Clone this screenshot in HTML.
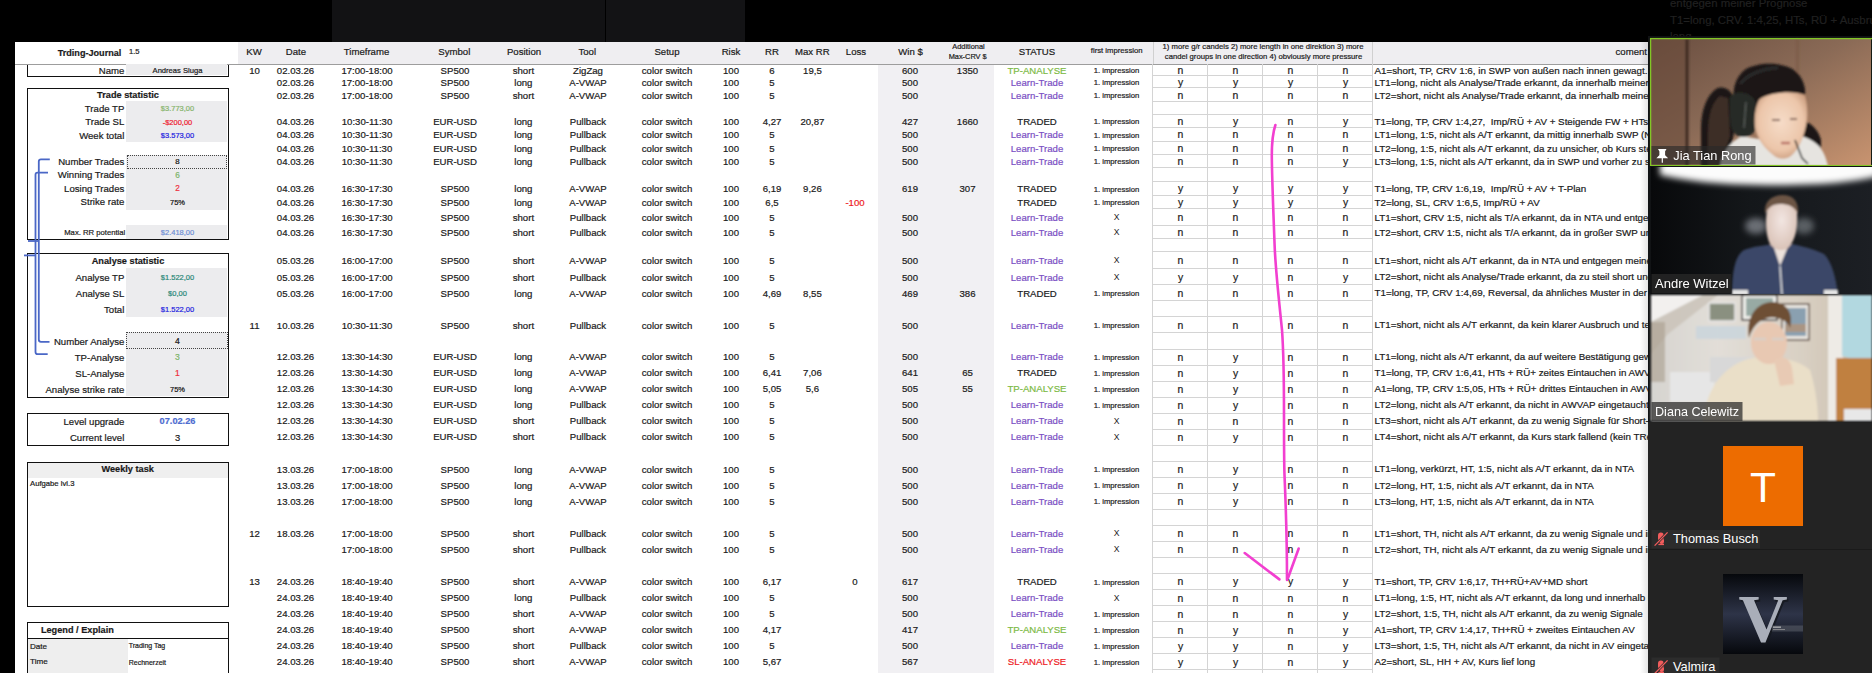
<!DOCTYPE html><html><head><meta charset="utf-8"><title>Trading Journal</title><style>
*{margin:0;padding:0;box-sizing:border-box}
html,body{width:1872px;height:673px;overflow:hidden;background:#000}
body{position:relative;font-family:"Liberation Sans",sans-serif;color:#1a1a1a}
.a{position:absolute}
.t{position:absolute;white-space:pre;line-height:1;-webkit-text-stroke:0.2px currentColor}
.c{text-align:center}
.r{text-align:right}
</style></head><body><div class="a" style="left:332px;top:0;width:273px;height:42px;background:#121214"></div>
<div class="a" style="left:606px;top:0;width:139px;height:42px;background:#131315"></div>
<div class="t" style="left:1670px;top:-2px;font-size:11.4px;color:#202020">entgegen meiner Prognose</div>
<div class="t" style="left:1670px;top:15px;font-size:11.4px;color:#202020">T1=long, CRV. 1:4,25, HTs, RÜ + Ausbruch</div>
<div class="t" style="left:1670px;top:31px;font-size:11.4px;color:#202020">long</div>
<div class="a" style="left:15px;top:42px;width:1633px;height:631px;background:#fff;overflow:hidden">
<div class="a" style="left:-15px;top:-42px;width:1872px;height:673px">
<div class="a" style="left:238px;top:42px;width:1410px;height:22px;background:#efeef1"></div>
<div class="a" style="left:15px;top:64px;width:1633px;height:1px;background:#9d9d9d"></div>
<div class="a" style="left:878px;top:65px;width:116px;height:620px;background:#f1f0f3"></div>
<div class="t" style="font-size:9.1px;height:9.1px;top:48.55px;left:57.70px;font-weight:bold;">Trding-Journal</div>
<div class="t" style="font-size:7.6px;height:7.6px;top:48.20px;left:129.00px;">1.5</div>
<div class="t" style="font-size:9.6px;height:9.6px;top:47.40px;left:154.00px;width:200px;text-align:center;">KW</div>
<div class="t" style="font-size:9.6px;height:9.6px;top:47.40px;left:196.00px;width:200px;text-align:center;">Date</div>
<div class="t" style="font-size:9.6px;height:9.6px;top:47.40px;left:266.50px;width:200px;text-align:center;">Timeframe</div>
<div class="t" style="font-size:9.6px;height:9.6px;top:47.40px;left:354.30px;width:200px;text-align:center;">Symbol</div>
<div class="t" style="font-size:9.6px;height:9.6px;top:47.40px;left:424.00px;width:200px;text-align:center;">Position</div>
<div class="t" style="font-size:9.6px;height:9.6px;top:47.40px;left:487.30px;width:200px;text-align:center;">Tool</div>
<div class="t" style="font-size:9.6px;height:9.6px;top:47.40px;left:567.00px;width:200px;text-align:center;">Setup</div>
<div class="t" style="font-size:9.6px;height:9.6px;top:47.40px;left:631.00px;width:200px;text-align:center;">Risk</div>
<div class="t" style="font-size:9.6px;height:9.6px;top:47.40px;left:672.00px;width:200px;text-align:center;">RR</div>
<div class="t" style="font-size:9.6px;height:9.6px;top:47.40px;left:712.30px;width:200px;text-align:center;">Max RR</div>
<div class="t" style="font-size:9.6px;height:9.6px;top:47.40px;left:756.00px;width:200px;text-align:center;">Loss</div>
<div class="t" style="font-size:9.6px;height:9.6px;top:47.40px;left:810.50px;width:200px;text-align:center;">Win $</div>
<div class="t" style="font-size:9.6px;height:9.6px;top:47.40px;left:937.00px;width:200px;text-align:center;">STATUS</div>
<div class="t" style="font-size:7.4px;height:7.4px;top:42.80px;left:868.50px;width:200px;text-align:center;">Additional</div>
<div class="t" style="font-size:7.4px;height:7.4px;top:52.80px;left:867.70px;width:200px;text-align:center;">Max-CRV $</div>
<div class="t" style="font-size:7.7px;height:7.7px;top:47.35px;left:1016.70px;width:200px;text-align:center;">first impression</div>
<div class="t" style="font-size:7.7px;height:7.7px;top:42.65px;left:1113.00px;width:300px;text-align:center;">1) more g/r candels 2) more length in one direktion 3) more</div>
<div class="t" style="font-size:7.7px;height:7.7px;top:53.15px;left:1113.50px;width:300px;text-align:center;">candel groups in one direction 4) obviously more pressure</div>
<div class="t" style="font-size:9.6px;height:9.6px;top:47.40px;left:1447.00px;width:200px;text-align:right;">coment</div>
<div class="a" style="left:1152.5px;top:42px;width:1px;height:22px;background:#d0d0d0"></div>
<div class="a" style="left:1372px;top:42px;width:1px;height:22px;background:#d0d0d0"></div>
<div class="a" style="left:1152px;top:64px;width:1px;height:620px;background:#d4d4d4"></div>
<div class="a" style="left:1207px;top:64px;width:1px;height:620px;background:#d4d4d4"></div>
<div class="a" style="left:1262px;top:64px;width:1px;height:620px;background:#d4d4d4"></div>
<div class="a" style="left:1317px;top:64px;width:1px;height:620px;background:#d4d4d4"></div>
<div class="a" style="left:1372px;top:64px;width:1px;height:620px;background:#d4d4d4"></div>
<div class="a" style="left:1153px;top:75px;width:220px;height:1px;background:#d4d4d4"></div>
<div class="a" style="left:1153px;top:87px;width:220px;height:1px;background:#d4d4d4"></div>
<div class="a" style="left:1153px;top:101px;width:220px;height:1px;background:#d4d4d4"></div>
<div class="a" style="left:1153px;top:114px;width:220px;height:1px;background:#d4d4d4"></div>
<div class="a" style="left:1153px;top:127px;width:220px;height:1px;background:#d4d4d4"></div>
<div class="a" style="left:1153px;top:141px;width:220px;height:1px;background:#d4d4d4"></div>
<div class="a" style="left:1153px;top:154px;width:220px;height:1px;background:#d4d4d4"></div>
<div class="a" style="left:1153px;top:167px;width:220px;height:1px;background:#d4d4d4"></div>
<div class="a" style="left:1153px;top:181px;width:220px;height:1px;background:#d4d4d4"></div>
<div class="a" style="left:1153px;top:195px;width:220px;height:1px;background:#d4d4d4"></div>
<div class="a" style="left:1153px;top:208px;width:220px;height:1px;background:#d4d4d4"></div>
<div class="a" style="left:1153px;top:225px;width:220px;height:1px;background:#d4d4d4"></div>
<div class="a" style="left:1153px;top:238px;width:220px;height:1px;background:#d4d4d4"></div>
<div class="a" style="left:1153px;top:251px;width:220px;height:1px;background:#d4d4d4"></div>
<div class="a" style="left:1153px;top:268px;width:220px;height:1px;background:#d4d4d4"></div>
<div class="a" style="left:1153px;top:284px;width:220px;height:1px;background:#d4d4d4"></div>
<div class="a" style="left:1153px;top:300px;width:220px;height:1px;background:#d4d4d4"></div>
<div class="a" style="left:1153px;top:316px;width:220px;height:1px;background:#d4d4d4"></div>
<div class="a" style="left:1153px;top:332px;width:220px;height:1px;background:#d4d4d4"></div>
<div class="a" style="left:1153px;top:349px;width:220px;height:1px;background:#d4d4d4"></div>
<div class="a" style="left:1153px;top:365px;width:220px;height:1px;background:#d4d4d4"></div>
<div class="a" style="left:1153px;top:381px;width:220px;height:1px;background:#d4d4d4"></div>
<div class="a" style="left:1153px;top:397px;width:220px;height:1px;background:#d4d4d4"></div>
<div class="a" style="left:1153px;top:413px;width:220px;height:1px;background:#d4d4d4"></div>
<div class="a" style="left:1153px;top:429px;width:220px;height:1px;background:#d4d4d4"></div>
<div class="a" style="left:1153px;top:445px;width:220px;height:1px;background:#d4d4d4"></div>
<div class="a" style="left:1153px;top:461px;width:220px;height:1px;background:#d4d4d4"></div>
<div class="a" style="left:1153px;top:477px;width:220px;height:1px;background:#d4d4d4"></div>
<div class="a" style="left:1153px;top:493px;width:220px;height:1px;background:#d4d4d4"></div>
<div class="a" style="left:1153px;top:509px;width:220px;height:1px;background:#d4d4d4"></div>
<div class="a" style="left:1153px;top:525px;width:220px;height:1px;background:#d4d4d4"></div>
<div class="a" style="left:1153px;top:541px;width:220px;height:1px;background:#d4d4d4"></div>
<div class="a" style="left:1153px;top:557px;width:220px;height:1px;background:#d4d4d4"></div>
<div class="a" style="left:1153px;top:573px;width:220px;height:1px;background:#d4d4d4"></div>
<div class="a" style="left:1153px;top:589px;width:220px;height:1px;background:#d4d4d4"></div>
<div class="a" style="left:1153px;top:605px;width:220px;height:1px;background:#d4d4d4"></div>
<div class="a" style="left:1153px;top:621px;width:220px;height:1px;background:#d4d4d4"></div>
<div class="a" style="left:1153px;top:637px;width:220px;height:1px;background:#d4d4d4"></div>
<div class="a" style="left:1153px;top:653px;width:220px;height:1px;background:#d4d4d4"></div>
<div class="a" style="left:1153px;top:669px;width:220px;height:1px;background:#d4d4d4"></div>
<div class="a" style="left:1153px;top:685px;width:220px;height:1px;background:#d4d4d4"></div>
<div class="t" style="font-size:9.6px;height:9.6px;top:65.75px;left:154.50px;width:200px;text-align:center;">10</div>
<div class="t" style="font-size:9.6px;height:9.6px;top:65.75px;left:195.50px;width:200px;text-align:center;">02.03.26</div>
<div class="t" style="font-size:9.6px;height:9.6px;top:65.75px;left:267.00px;width:200px;text-align:center;">17:00-18:00</div>
<div class="t" style="font-size:9.6px;height:9.6px;top:65.75px;left:355.00px;width:200px;text-align:center;">SP500</div>
<div class="t" style="font-size:9.6px;height:9.6px;top:65.75px;left:423.40px;width:200px;text-align:center;">short</div>
<div class="t" style="font-size:9.6px;height:9.6px;top:65.75px;left:488.00px;width:200px;text-align:center;">ZigZag</div>
<div class="t" style="font-size:9.6px;height:9.6px;top:65.75px;left:567.00px;width:200px;text-align:center;letter-spacing:0.04px">color switch</div>
<div class="t" style="font-size:9.6px;height:9.6px;top:65.75px;left:631.00px;width:200px;text-align:center;">100</div>
<div class="t" style="font-size:9.6px;height:9.6px;top:65.75px;left:672.00px;width:200px;text-align:center;">6</div>
<div class="t" style="font-size:9.6px;height:9.6px;top:65.75px;left:712.40px;width:200px;text-align:center;">19,5</div>
<div class="t" style="font-size:9.6px;height:9.6px;top:65.75px;left:810.00px;width:200px;text-align:center;">600</div>
<div class="t" style="font-size:9.6px;height:9.6px;top:65.75px;left:867.50px;width:200px;text-align:center;">1350</div>
<div class="t" style="font-size:9.6px;height:9.6px;top:65.75px;left:937.00px;width:200px;text-align:center;color:#7cba45;">TP-ANALYSE</div>
<div class="t" style="font-size:7.7px;height:7.7px;top:67.20px;left:1016.50px;width:200px;text-align:center;">1. impression</div>
<div class="t" style="font-size:10.4px;height:10.4px;top:65.95px;left:1080.50px;width:200px;text-align:center;">n</div>
<div class="t" style="font-size:10.4px;height:10.4px;top:65.95px;left:1135.50px;width:200px;text-align:center;">n</div>
<div class="t" style="font-size:10.4px;height:10.4px;top:65.95px;left:1190.50px;width:200px;text-align:center;">n</div>
<div class="t" style="font-size:10.4px;height:10.4px;top:65.95px;left:1245.50px;width:200px;text-align:center;">n</div>
<div class="t" style="font-size:9.8px;height:9.8px;top:65.65px;left:1374.50px;">A1=short, TP, CRV 1:6, in SWP von außen nach innen gewagt.</div>
<div class="t" style="font-size:9.6px;height:9.6px;top:78.00px;left:195.50px;width:200px;text-align:center;">02.03.26</div>
<div class="t" style="font-size:9.6px;height:9.6px;top:78.00px;left:267.00px;width:200px;text-align:center;">17:00-18:00</div>
<div class="t" style="font-size:9.6px;height:9.6px;top:78.00px;left:355.00px;width:200px;text-align:center;">SP500</div>
<div class="t" style="font-size:9.6px;height:9.6px;top:78.00px;left:423.40px;width:200px;text-align:center;">long</div>
<div class="t" style="font-size:9.6px;height:9.6px;top:78.00px;left:488.00px;width:200px;text-align:center;">A-VWAP</div>
<div class="t" style="font-size:9.6px;height:9.6px;top:78.00px;left:567.00px;width:200px;text-align:center;letter-spacing:0.04px">color switch</div>
<div class="t" style="font-size:9.6px;height:9.6px;top:78.00px;left:631.00px;width:200px;text-align:center;">100</div>
<div class="t" style="font-size:9.6px;height:9.6px;top:78.00px;left:672.00px;width:200px;text-align:center;">5</div>
<div class="t" style="font-size:9.6px;height:9.6px;top:78.00px;left:810.00px;width:200px;text-align:center;">500</div>
<div class="t" style="font-size:9.6px;height:9.6px;top:78.00px;left:937.00px;width:200px;text-align:center;color:#7b4fc4;">Learn-Trade</div>
<div class="t" style="font-size:7.7px;height:7.7px;top:79.45px;left:1016.50px;width:200px;text-align:center;">1. impression</div>
<div class="t" style="font-size:10.4px;height:10.4px;top:78.20px;left:1080.50px;width:200px;text-align:center;">y</div>
<div class="t" style="font-size:10.4px;height:10.4px;top:78.20px;left:1135.50px;width:200px;text-align:center;">y</div>
<div class="t" style="font-size:10.4px;height:10.4px;top:78.20px;left:1190.50px;width:200px;text-align:center;">y</div>
<div class="t" style="font-size:10.4px;height:10.4px;top:78.20px;left:1245.50px;width:200px;text-align:center;">y</div>
<div class="t" style="font-size:9.8px;height:9.8px;top:77.90px;left:1374.50px;">LT1=long, nicht als Analyse/Trade erkannt, da innerhalb meiner NTA</div>
<div class="t" style="font-size:9.6px;height:9.6px;top:90.75px;left:195.50px;width:200px;text-align:center;">02.03.26</div>
<div class="t" style="font-size:9.6px;height:9.6px;top:90.75px;left:267.00px;width:200px;text-align:center;">17:00-18:00</div>
<div class="t" style="font-size:9.6px;height:9.6px;top:90.75px;left:355.00px;width:200px;text-align:center;">SP500</div>
<div class="t" style="font-size:9.6px;height:9.6px;top:90.75px;left:423.40px;width:200px;text-align:center;">short</div>
<div class="t" style="font-size:9.6px;height:9.6px;top:90.75px;left:488.00px;width:200px;text-align:center;">A-VWAP</div>
<div class="t" style="font-size:9.6px;height:9.6px;top:90.75px;left:567.00px;width:200px;text-align:center;letter-spacing:0.04px">color switch</div>
<div class="t" style="font-size:9.6px;height:9.6px;top:90.75px;left:631.00px;width:200px;text-align:center;">100</div>
<div class="t" style="font-size:9.6px;height:9.6px;top:90.75px;left:672.00px;width:200px;text-align:center;">5</div>
<div class="t" style="font-size:9.6px;height:9.6px;top:90.75px;left:810.00px;width:200px;text-align:center;">500</div>
<div class="t" style="font-size:9.6px;height:9.6px;top:90.75px;left:937.00px;width:200px;text-align:center;color:#7b4fc4;">Learn-Trade</div>
<div class="t" style="font-size:7.7px;height:7.7px;top:92.20px;left:1016.50px;width:200px;text-align:center;">1. impression</div>
<div class="t" style="font-size:10.4px;height:10.4px;top:90.95px;left:1080.50px;width:200px;text-align:center;">n</div>
<div class="t" style="font-size:10.4px;height:10.4px;top:90.95px;left:1135.50px;width:200px;text-align:center;">n</div>
<div class="t" style="font-size:10.4px;height:10.4px;top:90.95px;left:1190.50px;width:200px;text-align:center;">n</div>
<div class="t" style="font-size:10.4px;height:10.4px;top:90.95px;left:1245.50px;width:200px;text-align:center;">n</div>
<div class="t" style="font-size:9.8px;height:9.8px;top:90.65px;left:1374.50px;">LT2=short, nicht als Analyse/Trade erkannt, da innerhalb meiner NTA</div>
<div class="t" style="font-size:9.6px;height:9.6px;top:117.00px;left:195.50px;width:200px;text-align:center;">04.03.26</div>
<div class="t" style="font-size:9.6px;height:9.6px;top:117.00px;left:267.00px;width:200px;text-align:center;">10:30-11:30</div>
<div class="t" style="font-size:9.6px;height:9.6px;top:117.00px;left:355.00px;width:200px;text-align:center;">EUR-USD</div>
<div class="t" style="font-size:9.6px;height:9.6px;top:117.00px;left:423.40px;width:200px;text-align:center;">long</div>
<div class="t" style="font-size:9.6px;height:9.6px;top:117.00px;left:488.00px;width:200px;text-align:center;">Pullback</div>
<div class="t" style="font-size:9.6px;height:9.6px;top:117.00px;left:567.00px;width:200px;text-align:center;letter-spacing:0.04px">color switch</div>
<div class="t" style="font-size:9.6px;height:9.6px;top:117.00px;left:631.00px;width:200px;text-align:center;">100</div>
<div class="t" style="font-size:9.6px;height:9.6px;top:117.00px;left:672.00px;width:200px;text-align:center;">4,27</div>
<div class="t" style="font-size:9.6px;height:9.6px;top:117.00px;left:712.40px;width:200px;text-align:center;">20,87</div>
<div class="t" style="font-size:9.6px;height:9.6px;top:117.00px;left:810.00px;width:200px;text-align:center;">427</div>
<div class="t" style="font-size:9.6px;height:9.6px;top:117.00px;left:867.50px;width:200px;text-align:center;">1660</div>
<div class="t" style="font-size:9.6px;height:9.6px;top:117.00px;left:937.00px;width:200px;text-align:center;color:#1a1a1a;">TRADED</div>
<div class="t" style="font-size:7.7px;height:7.7px;top:118.45px;left:1016.50px;width:200px;text-align:center;">1. impression</div>
<div class="t" style="font-size:10.4px;height:10.4px;top:117.20px;left:1080.50px;width:200px;text-align:center;">n</div>
<div class="t" style="font-size:10.4px;height:10.4px;top:117.20px;left:1135.50px;width:200px;text-align:center;">y</div>
<div class="t" style="font-size:10.4px;height:10.4px;top:117.20px;left:1190.50px;width:200px;text-align:center;">n</div>
<div class="t" style="font-size:10.4px;height:10.4px;top:117.20px;left:1245.50px;width:200px;text-align:center;">y</div>
<div class="t" style="font-size:9.8px;height:9.8px;top:116.90px;left:1374.50px;">T1=long, TP, CRV 1:4,27,  Imp/RÜ + AV + Steigende FW + HTs + T-Plan</div>
<div class="t" style="font-size:9.6px;height:9.6px;top:130.25px;left:195.50px;width:200px;text-align:center;">04.03.26</div>
<div class="t" style="font-size:9.6px;height:9.6px;top:130.25px;left:267.00px;width:200px;text-align:center;">10:30-11:30</div>
<div class="t" style="font-size:9.6px;height:9.6px;top:130.25px;left:355.00px;width:200px;text-align:center;">EUR-USD</div>
<div class="t" style="font-size:9.6px;height:9.6px;top:130.25px;left:423.40px;width:200px;text-align:center;">long</div>
<div class="t" style="font-size:9.6px;height:9.6px;top:130.25px;left:488.00px;width:200px;text-align:center;">Pullback</div>
<div class="t" style="font-size:9.6px;height:9.6px;top:130.25px;left:567.00px;width:200px;text-align:center;letter-spacing:0.04px">color switch</div>
<div class="t" style="font-size:9.6px;height:9.6px;top:130.25px;left:631.00px;width:200px;text-align:center;">100</div>
<div class="t" style="font-size:9.6px;height:9.6px;top:130.25px;left:672.00px;width:200px;text-align:center;">5</div>
<div class="t" style="font-size:9.6px;height:9.6px;top:130.25px;left:810.00px;width:200px;text-align:center;">500</div>
<div class="t" style="font-size:9.6px;height:9.6px;top:130.25px;left:937.00px;width:200px;text-align:center;color:#7b4fc4;">Learn-Trade</div>
<div class="t" style="font-size:7.7px;height:7.7px;top:131.70px;left:1016.50px;width:200px;text-align:center;">1. impression</div>
<div class="t" style="font-size:10.4px;height:10.4px;top:130.45px;left:1080.50px;width:200px;text-align:center;">n</div>
<div class="t" style="font-size:10.4px;height:10.4px;top:130.45px;left:1135.50px;width:200px;text-align:center;">n</div>
<div class="t" style="font-size:10.4px;height:10.4px;top:130.45px;left:1190.50px;width:200px;text-align:center;">n</div>
<div class="t" style="font-size:10.4px;height:10.4px;top:130.45px;left:1245.50px;width:200px;text-align:center;">n</div>
<div class="t" style="font-size:9.8px;height:9.8px;top:130.15px;left:1374.50px;">LT1=long, 1:5, nicht als A/T erkannt, da mittig innerhalb SWP (NTA)</div>
<div class="t" style="font-size:9.6px;height:9.6px;top:143.75px;left:195.50px;width:200px;text-align:center;">04.03.26</div>
<div class="t" style="font-size:9.6px;height:9.6px;top:143.75px;left:267.00px;width:200px;text-align:center;">10:30-11:30</div>
<div class="t" style="font-size:9.6px;height:9.6px;top:143.75px;left:355.00px;width:200px;text-align:center;">EUR-USD</div>
<div class="t" style="font-size:9.6px;height:9.6px;top:143.75px;left:423.40px;width:200px;text-align:center;">long</div>
<div class="t" style="font-size:9.6px;height:9.6px;top:143.75px;left:488.00px;width:200px;text-align:center;">Pullback</div>
<div class="t" style="font-size:9.6px;height:9.6px;top:143.75px;left:567.00px;width:200px;text-align:center;letter-spacing:0.04px">color switch</div>
<div class="t" style="font-size:9.6px;height:9.6px;top:143.75px;left:631.00px;width:200px;text-align:center;">100</div>
<div class="t" style="font-size:9.6px;height:9.6px;top:143.75px;left:672.00px;width:200px;text-align:center;">5</div>
<div class="t" style="font-size:9.6px;height:9.6px;top:143.75px;left:810.00px;width:200px;text-align:center;">500</div>
<div class="t" style="font-size:9.6px;height:9.6px;top:143.75px;left:937.00px;width:200px;text-align:center;color:#7b4fc4;">Learn-Trade</div>
<div class="t" style="font-size:7.7px;height:7.7px;top:145.20px;left:1016.50px;width:200px;text-align:center;">1. impression</div>
<div class="t" style="font-size:10.4px;height:10.4px;top:143.95px;left:1080.50px;width:200px;text-align:center;">n</div>
<div class="t" style="font-size:10.4px;height:10.4px;top:143.95px;left:1135.50px;width:200px;text-align:center;">n</div>
<div class="t" style="font-size:10.4px;height:10.4px;top:143.95px;left:1190.50px;width:200px;text-align:center;">n</div>
<div class="t" style="font-size:10.4px;height:10.4px;top:143.95px;left:1245.50px;width:200px;text-align:center;">n</div>
<div class="t" style="font-size:9.8px;height:9.8px;top:143.65px;left:1374.50px;">LT2=long, 1:5, nicht als A/T erkannt, da zu unsicher, ob Kurs steigt</div>
<div class="t" style="font-size:9.6px;height:9.6px;top:157.00px;left:195.50px;width:200px;text-align:center;">04.03.26</div>
<div class="t" style="font-size:9.6px;height:9.6px;top:157.00px;left:267.00px;width:200px;text-align:center;">10:30-11:30</div>
<div class="t" style="font-size:9.6px;height:9.6px;top:157.00px;left:355.00px;width:200px;text-align:center;">EUR-USD</div>
<div class="t" style="font-size:9.6px;height:9.6px;top:157.00px;left:423.40px;width:200px;text-align:center;">long</div>
<div class="t" style="font-size:9.6px;height:9.6px;top:157.00px;left:488.00px;width:200px;text-align:center;">Pullback</div>
<div class="t" style="font-size:9.6px;height:9.6px;top:157.00px;left:567.00px;width:200px;text-align:center;letter-spacing:0.04px">color switch</div>
<div class="t" style="font-size:9.6px;height:9.6px;top:157.00px;left:631.00px;width:200px;text-align:center;">100</div>
<div class="t" style="font-size:9.6px;height:9.6px;top:157.00px;left:672.00px;width:200px;text-align:center;">5</div>
<div class="t" style="font-size:9.6px;height:9.6px;top:157.00px;left:810.00px;width:200px;text-align:center;">500</div>
<div class="t" style="font-size:9.6px;height:9.6px;top:157.00px;left:937.00px;width:200px;text-align:center;color:#7b4fc4;">Learn-Trade</div>
<div class="t" style="font-size:7.7px;height:7.7px;top:158.45px;left:1016.50px;width:200px;text-align:center;">1. impression</div>
<div class="t" style="font-size:10.4px;height:10.4px;top:157.20px;left:1080.50px;width:200px;text-align:center;">n</div>
<div class="t" style="font-size:10.4px;height:10.4px;top:157.20px;left:1135.50px;width:200px;text-align:center;">n</div>
<div class="t" style="font-size:10.4px;height:10.4px;top:157.20px;left:1190.50px;width:200px;text-align:center;">n</div>
<div class="t" style="font-size:10.4px;height:10.4px;top:157.20px;left:1245.50px;width:200px;text-align:center;">y</div>
<div class="t" style="font-size:9.8px;height:9.8px;top:156.90px;left:1374.50px;">LT3=long, 1:5, nicht als A/T erkannt, da in SWP und vorher zu steil</div>
<div class="t" style="font-size:9.6px;height:9.6px;top:184.25px;left:195.50px;width:200px;text-align:center;">04.03.26</div>
<div class="t" style="font-size:9.6px;height:9.6px;top:184.25px;left:267.00px;width:200px;text-align:center;">16:30-17:30</div>
<div class="t" style="font-size:9.6px;height:9.6px;top:184.25px;left:355.00px;width:200px;text-align:center;">SP500</div>
<div class="t" style="font-size:9.6px;height:9.6px;top:184.25px;left:423.40px;width:200px;text-align:center;">long</div>
<div class="t" style="font-size:9.6px;height:9.6px;top:184.25px;left:488.00px;width:200px;text-align:center;">A-VWAP</div>
<div class="t" style="font-size:9.6px;height:9.6px;top:184.25px;left:567.00px;width:200px;text-align:center;letter-spacing:0.04px">color switch</div>
<div class="t" style="font-size:9.6px;height:9.6px;top:184.25px;left:631.00px;width:200px;text-align:center;">100</div>
<div class="t" style="font-size:9.6px;height:9.6px;top:184.25px;left:672.00px;width:200px;text-align:center;">6,19</div>
<div class="t" style="font-size:9.6px;height:9.6px;top:184.25px;left:712.40px;width:200px;text-align:center;">9,26</div>
<div class="t" style="font-size:9.6px;height:9.6px;top:184.25px;left:810.00px;width:200px;text-align:center;">619</div>
<div class="t" style="font-size:9.6px;height:9.6px;top:184.25px;left:867.50px;width:200px;text-align:center;">307</div>
<div class="t" style="font-size:9.6px;height:9.6px;top:184.25px;left:937.00px;width:200px;text-align:center;color:#1a1a1a;">TRADED</div>
<div class="t" style="font-size:7.7px;height:7.7px;top:185.70px;left:1016.50px;width:200px;text-align:center;">1. impression</div>
<div class="t" style="font-size:10.4px;height:10.4px;top:184.45px;left:1080.50px;width:200px;text-align:center;">y</div>
<div class="t" style="font-size:10.4px;height:10.4px;top:184.45px;left:1135.50px;width:200px;text-align:center;">y</div>
<div class="t" style="font-size:10.4px;height:10.4px;top:184.45px;left:1190.50px;width:200px;text-align:center;">y</div>
<div class="t" style="font-size:10.4px;height:10.4px;top:184.45px;left:1245.50px;width:200px;text-align:center;">y</div>
<div class="t" style="font-size:9.8px;height:9.8px;top:184.15px;left:1374.50px;">T1=long, TP, CRV 1:6,19,  Imp/RÜ + AV + T-Plan</div>
<div class="t" style="font-size:9.6px;height:9.6px;top:197.75px;left:195.50px;width:200px;text-align:center;">04.03.26</div>
<div class="t" style="font-size:9.6px;height:9.6px;top:197.75px;left:267.00px;width:200px;text-align:center;">16:30-17:30</div>
<div class="t" style="font-size:9.6px;height:9.6px;top:197.75px;left:355.00px;width:200px;text-align:center;">SP500</div>
<div class="t" style="font-size:9.6px;height:9.6px;top:197.75px;left:423.40px;width:200px;text-align:center;">long</div>
<div class="t" style="font-size:9.6px;height:9.6px;top:197.75px;left:488.00px;width:200px;text-align:center;">A-VWAP</div>
<div class="t" style="font-size:9.6px;height:9.6px;top:197.75px;left:567.00px;width:200px;text-align:center;letter-spacing:0.04px">color switch</div>
<div class="t" style="font-size:9.6px;height:9.6px;top:197.75px;left:631.00px;width:200px;text-align:center;">100</div>
<div class="t" style="font-size:9.6px;height:9.6px;top:197.75px;left:672.00px;width:200px;text-align:center;">6,5</div>
<div class="t" style="font-size:9.6px;height:9.6px;top:197.75px;left:755.00px;width:200px;text-align:center;color:#ee1c25;">-100</div>
<div class="t" style="font-size:9.6px;height:9.6px;top:197.75px;left:937.00px;width:200px;text-align:center;color:#1a1a1a;">TRADED</div>
<div class="t" style="font-size:7.7px;height:7.7px;top:199.20px;left:1016.50px;width:200px;text-align:center;">1. impression</div>
<div class="t" style="font-size:10.4px;height:10.4px;top:197.95px;left:1080.50px;width:200px;text-align:center;">y</div>
<div class="t" style="font-size:10.4px;height:10.4px;top:197.95px;left:1135.50px;width:200px;text-align:center;">y</div>
<div class="t" style="font-size:10.4px;height:10.4px;top:197.95px;left:1190.50px;width:200px;text-align:center;">y</div>
<div class="t" style="font-size:10.4px;height:10.4px;top:197.95px;left:1245.50px;width:200px;text-align:center;">y</div>
<div class="t" style="font-size:9.8px;height:9.8px;top:197.65px;left:1374.50px;">T2=long, SL, CRV 1:6,5, Imp/RÜ + AV</div>
<div class="t" style="font-size:9.6px;height:9.6px;top:213.00px;left:195.50px;width:200px;text-align:center;">04.03.26</div>
<div class="t" style="font-size:9.6px;height:9.6px;top:213.00px;left:267.00px;width:200px;text-align:center;">16:30-17:30</div>
<div class="t" style="font-size:9.6px;height:9.6px;top:213.00px;left:355.00px;width:200px;text-align:center;">SP500</div>
<div class="t" style="font-size:9.6px;height:9.6px;top:213.00px;left:423.40px;width:200px;text-align:center;">short</div>
<div class="t" style="font-size:9.6px;height:9.6px;top:213.00px;left:488.00px;width:200px;text-align:center;">Pullback</div>
<div class="t" style="font-size:9.6px;height:9.6px;top:213.00px;left:567.00px;width:200px;text-align:center;letter-spacing:0.04px">color switch</div>
<div class="t" style="font-size:9.6px;height:9.6px;top:213.00px;left:631.00px;width:200px;text-align:center;">100</div>
<div class="t" style="font-size:9.6px;height:9.6px;top:213.00px;left:672.00px;width:200px;text-align:center;">5</div>
<div class="t" style="font-size:9.6px;height:9.6px;top:213.00px;left:810.00px;width:200px;text-align:center;">500</div>
<div class="t" style="font-size:9.6px;height:9.6px;top:213.00px;left:937.00px;width:200px;text-align:center;color:#7b4fc4;">Learn-Trade</div>
<div class="t" style="font-size:8.6px;height:8.6px;top:213.20px;left:1016.50px;width:200px;text-align:center;-webkit-text-stroke:0;color:#222">X</div>
<div class="t" style="font-size:10.4px;height:10.4px;top:213.20px;left:1080.50px;width:200px;text-align:center;">n</div>
<div class="t" style="font-size:10.4px;height:10.4px;top:213.20px;left:1135.50px;width:200px;text-align:center;">n</div>
<div class="t" style="font-size:10.4px;height:10.4px;top:213.20px;left:1190.50px;width:200px;text-align:center;">n</div>
<div class="t" style="font-size:10.4px;height:10.4px;top:213.20px;left:1245.50px;width:200px;text-align:center;">n</div>
<div class="t" style="font-size:9.8px;height:9.8px;top:212.90px;left:1374.50px;">LT1=short, CRV 1:5, nicht als T/A erkannt, da in NTA und entgegen</div>
<div class="t" style="font-size:9.6px;height:9.6px;top:228.00px;left:195.50px;width:200px;text-align:center;">04.03.26</div>
<div class="t" style="font-size:9.6px;height:9.6px;top:228.00px;left:267.00px;width:200px;text-align:center;">16:30-17:30</div>
<div class="t" style="font-size:9.6px;height:9.6px;top:228.00px;left:355.00px;width:200px;text-align:center;">SP500</div>
<div class="t" style="font-size:9.6px;height:9.6px;top:228.00px;left:423.40px;width:200px;text-align:center;">short</div>
<div class="t" style="font-size:9.6px;height:9.6px;top:228.00px;left:488.00px;width:200px;text-align:center;">Pullback</div>
<div class="t" style="font-size:9.6px;height:9.6px;top:228.00px;left:567.00px;width:200px;text-align:center;letter-spacing:0.04px">color switch</div>
<div class="t" style="font-size:9.6px;height:9.6px;top:228.00px;left:631.00px;width:200px;text-align:center;">100</div>
<div class="t" style="font-size:9.6px;height:9.6px;top:228.00px;left:672.00px;width:200px;text-align:center;">5</div>
<div class="t" style="font-size:9.6px;height:9.6px;top:228.00px;left:810.00px;width:200px;text-align:center;">500</div>
<div class="t" style="font-size:9.6px;height:9.6px;top:228.00px;left:937.00px;width:200px;text-align:center;color:#7b4fc4;">Learn-Trade</div>
<div class="t" style="font-size:8.6px;height:8.6px;top:228.20px;left:1016.50px;width:200px;text-align:center;-webkit-text-stroke:0;color:#222">X</div>
<div class="t" style="font-size:10.4px;height:10.4px;top:228.20px;left:1080.50px;width:200px;text-align:center;">n</div>
<div class="t" style="font-size:10.4px;height:10.4px;top:228.20px;left:1135.50px;width:200px;text-align:center;">n</div>
<div class="t" style="font-size:10.4px;height:10.4px;top:228.20px;left:1190.50px;width:200px;text-align:center;">n</div>
<div class="t" style="font-size:10.4px;height:10.4px;top:228.20px;left:1245.50px;width:200px;text-align:center;">n</div>
<div class="t" style="font-size:9.8px;height:9.8px;top:227.90px;left:1374.50px;">LT2=short, CRV 1:5, nicht als T/A erkannt, da in großer SWP und</div>
<div class="t" style="font-size:9.6px;height:9.6px;top:256.25px;left:195.50px;width:200px;text-align:center;">05.03.26</div>
<div class="t" style="font-size:9.6px;height:9.6px;top:256.25px;left:267.00px;width:200px;text-align:center;">16:00-17:00</div>
<div class="t" style="font-size:9.6px;height:9.6px;top:256.25px;left:355.00px;width:200px;text-align:center;">SP500</div>
<div class="t" style="font-size:9.6px;height:9.6px;top:256.25px;left:423.40px;width:200px;text-align:center;">short</div>
<div class="t" style="font-size:9.6px;height:9.6px;top:256.25px;left:488.00px;width:200px;text-align:center;">A-VWAP</div>
<div class="t" style="font-size:9.6px;height:9.6px;top:256.25px;left:567.00px;width:200px;text-align:center;letter-spacing:0.04px">color switch</div>
<div class="t" style="font-size:9.6px;height:9.6px;top:256.25px;left:631.00px;width:200px;text-align:center;">100</div>
<div class="t" style="font-size:9.6px;height:9.6px;top:256.25px;left:672.00px;width:200px;text-align:center;">5</div>
<div class="t" style="font-size:9.6px;height:9.6px;top:256.25px;left:810.00px;width:200px;text-align:center;">500</div>
<div class="t" style="font-size:9.6px;height:9.6px;top:256.25px;left:937.00px;width:200px;text-align:center;color:#7b4fc4;">Learn-Trade</div>
<div class="t" style="font-size:8.6px;height:8.6px;top:256.45px;left:1016.50px;width:200px;text-align:center;-webkit-text-stroke:0;color:#222">X</div>
<div class="t" style="font-size:10.4px;height:10.4px;top:256.45px;left:1080.50px;width:200px;text-align:center;">n</div>
<div class="t" style="font-size:10.4px;height:10.4px;top:256.45px;left:1135.50px;width:200px;text-align:center;">n</div>
<div class="t" style="font-size:10.4px;height:10.4px;top:256.45px;left:1190.50px;width:200px;text-align:center;">n</div>
<div class="t" style="font-size:10.4px;height:10.4px;top:256.45px;left:1245.50px;width:200px;text-align:center;">n</div>
<div class="t" style="font-size:9.8px;height:9.8px;top:256.15px;left:1374.50px;">LT1=short, nicht als A/T erkannt, da in NTA und entgegen meiner</div>
<div class="t" style="font-size:9.6px;height:9.6px;top:272.50px;left:195.50px;width:200px;text-align:center;">05.03.26</div>
<div class="t" style="font-size:9.6px;height:9.6px;top:272.50px;left:267.00px;width:200px;text-align:center;">16:00-17:00</div>
<div class="t" style="font-size:9.6px;height:9.6px;top:272.50px;left:355.00px;width:200px;text-align:center;">SP500</div>
<div class="t" style="font-size:9.6px;height:9.6px;top:272.50px;left:423.40px;width:200px;text-align:center;">short</div>
<div class="t" style="font-size:9.6px;height:9.6px;top:272.50px;left:488.00px;width:200px;text-align:center;">Pullback</div>
<div class="t" style="font-size:9.6px;height:9.6px;top:272.50px;left:567.00px;width:200px;text-align:center;letter-spacing:0.04px">color switch</div>
<div class="t" style="font-size:9.6px;height:9.6px;top:272.50px;left:631.00px;width:200px;text-align:center;">100</div>
<div class="t" style="font-size:9.6px;height:9.6px;top:272.50px;left:672.00px;width:200px;text-align:center;">5</div>
<div class="t" style="font-size:9.6px;height:9.6px;top:272.50px;left:810.00px;width:200px;text-align:center;">500</div>
<div class="t" style="font-size:9.6px;height:9.6px;top:272.50px;left:937.00px;width:200px;text-align:center;color:#7b4fc4;">Learn-Trade</div>
<div class="t" style="font-size:8.6px;height:8.6px;top:272.70px;left:1016.50px;width:200px;text-align:center;-webkit-text-stroke:0;color:#222">X</div>
<div class="t" style="font-size:10.4px;height:10.4px;top:272.70px;left:1080.50px;width:200px;text-align:center;">y</div>
<div class="t" style="font-size:10.4px;height:10.4px;top:272.70px;left:1135.50px;width:200px;text-align:center;">y</div>
<div class="t" style="font-size:10.4px;height:10.4px;top:272.70px;left:1190.50px;width:200px;text-align:center;">n</div>
<div class="t" style="font-size:10.4px;height:10.4px;top:272.70px;left:1245.50px;width:200px;text-align:center;">y</div>
<div class="t" style="font-size:9.8px;height:9.8px;top:272.40px;left:1374.50px;">LT2=short, nicht als Analyse/Trade erkannt, da zu steil short und</div>
<div class="t" style="font-size:9.6px;height:9.6px;top:288.50px;left:195.50px;width:200px;text-align:center;">05.03.26</div>
<div class="t" style="font-size:9.6px;height:9.6px;top:288.50px;left:267.00px;width:200px;text-align:center;">16:00-17:00</div>
<div class="t" style="font-size:9.6px;height:9.6px;top:288.50px;left:355.00px;width:200px;text-align:center;">SP500</div>
<div class="t" style="font-size:9.6px;height:9.6px;top:288.50px;left:423.40px;width:200px;text-align:center;">long</div>
<div class="t" style="font-size:9.6px;height:9.6px;top:288.50px;left:488.00px;width:200px;text-align:center;">A-VWAP</div>
<div class="t" style="font-size:9.6px;height:9.6px;top:288.50px;left:567.00px;width:200px;text-align:center;letter-spacing:0.04px">color switch</div>
<div class="t" style="font-size:9.6px;height:9.6px;top:288.50px;left:631.00px;width:200px;text-align:center;">100</div>
<div class="t" style="font-size:9.6px;height:9.6px;top:288.50px;left:672.00px;width:200px;text-align:center;">4,69</div>
<div class="t" style="font-size:9.6px;height:9.6px;top:288.50px;left:712.40px;width:200px;text-align:center;">8,55</div>
<div class="t" style="font-size:9.6px;height:9.6px;top:288.50px;left:810.00px;width:200px;text-align:center;">469</div>
<div class="t" style="font-size:9.6px;height:9.6px;top:288.50px;left:867.50px;width:200px;text-align:center;">386</div>
<div class="t" style="font-size:9.6px;height:9.6px;top:288.50px;left:937.00px;width:200px;text-align:center;color:#1a1a1a;">TRADED</div>
<div class="t" style="font-size:7.7px;height:7.7px;top:289.95px;left:1016.50px;width:200px;text-align:center;">1. impression</div>
<div class="t" style="font-size:10.4px;height:10.4px;top:288.70px;left:1080.50px;width:200px;text-align:center;">n</div>
<div class="t" style="font-size:10.4px;height:10.4px;top:288.70px;left:1135.50px;width:200px;text-align:center;">n</div>
<div class="t" style="font-size:10.4px;height:10.4px;top:288.70px;left:1190.50px;width:200px;text-align:center;">n</div>
<div class="t" style="font-size:10.4px;height:10.4px;top:288.70px;left:1245.50px;width:200px;text-align:center;">n</div>
<div class="t" style="font-size:9.8px;height:9.8px;top:288.40px;left:1374.50px;">T1=long, TP, CRV 1:4,69, Reversal, da ähnliches Muster in der</div>
<div class="t" style="font-size:9.6px;height:9.6px;top:320.50px;left:154.50px;width:200px;text-align:center;">11</div>
<div class="t" style="font-size:9.6px;height:9.6px;top:320.50px;left:195.50px;width:200px;text-align:center;">10.03.26</div>
<div class="t" style="font-size:9.6px;height:9.6px;top:320.50px;left:267.00px;width:200px;text-align:center;">10:30-11:30</div>
<div class="t" style="font-size:9.6px;height:9.6px;top:320.50px;left:355.00px;width:200px;text-align:center;">SP500</div>
<div class="t" style="font-size:9.6px;height:9.6px;top:320.50px;left:423.40px;width:200px;text-align:center;">short</div>
<div class="t" style="font-size:9.6px;height:9.6px;top:320.50px;left:488.00px;width:200px;text-align:center;">Pullback</div>
<div class="t" style="font-size:9.6px;height:9.6px;top:320.50px;left:567.00px;width:200px;text-align:center;letter-spacing:0.04px">color switch</div>
<div class="t" style="font-size:9.6px;height:9.6px;top:320.50px;left:631.00px;width:200px;text-align:center;">100</div>
<div class="t" style="font-size:9.6px;height:9.6px;top:320.50px;left:672.00px;width:200px;text-align:center;">5</div>
<div class="t" style="font-size:9.6px;height:9.6px;top:320.50px;left:810.00px;width:200px;text-align:center;">500</div>
<div class="t" style="font-size:9.6px;height:9.6px;top:320.50px;left:937.00px;width:200px;text-align:center;color:#7b4fc4;">Learn-Trade</div>
<div class="t" style="font-size:7.7px;height:7.7px;top:321.95px;left:1016.50px;width:200px;text-align:center;">1. impression</div>
<div class="t" style="font-size:10.4px;height:10.4px;top:320.70px;left:1080.50px;width:200px;text-align:center;">n</div>
<div class="t" style="font-size:10.4px;height:10.4px;top:320.70px;left:1135.50px;width:200px;text-align:center;">n</div>
<div class="t" style="font-size:10.4px;height:10.4px;top:320.70px;left:1190.50px;width:200px;text-align:center;">n</div>
<div class="t" style="font-size:10.4px;height:10.4px;top:320.70px;left:1245.50px;width:200px;text-align:center;">n</div>
<div class="t" style="font-size:9.8px;height:9.8px;top:320.40px;left:1374.50px;">LT1=short, nicht als A/T erkannt, da kein klarer Ausbruch und teil</div>
<div class="t" style="font-size:9.6px;height:9.6px;top:352.30px;left:195.50px;width:200px;text-align:center;">12.03.26</div>
<div class="t" style="font-size:9.6px;height:9.6px;top:352.30px;left:267.00px;width:200px;text-align:center;">13:30-14:30</div>
<div class="t" style="font-size:9.6px;height:9.6px;top:352.30px;left:355.00px;width:200px;text-align:center;">EUR-USD</div>
<div class="t" style="font-size:9.6px;height:9.6px;top:352.30px;left:423.40px;width:200px;text-align:center;">long</div>
<div class="t" style="font-size:9.6px;height:9.6px;top:352.30px;left:488.00px;width:200px;text-align:center;">A-VWAP</div>
<div class="t" style="font-size:9.6px;height:9.6px;top:352.30px;left:567.00px;width:200px;text-align:center;letter-spacing:0.04px">color switch</div>
<div class="t" style="font-size:9.6px;height:9.6px;top:352.30px;left:631.00px;width:200px;text-align:center;">100</div>
<div class="t" style="font-size:9.6px;height:9.6px;top:352.30px;left:672.00px;width:200px;text-align:center;">5</div>
<div class="t" style="font-size:9.6px;height:9.6px;top:352.30px;left:810.00px;width:200px;text-align:center;">500</div>
<div class="t" style="font-size:9.6px;height:9.6px;top:352.30px;left:937.00px;width:200px;text-align:center;color:#7b4fc4;">Learn-Trade</div>
<div class="t" style="font-size:7.7px;height:7.7px;top:353.75px;left:1016.50px;width:200px;text-align:center;">1. impression</div>
<div class="t" style="font-size:10.4px;height:10.4px;top:352.50px;left:1080.50px;width:200px;text-align:center;">n</div>
<div class="t" style="font-size:10.4px;height:10.4px;top:352.50px;left:1135.50px;width:200px;text-align:center;">y</div>
<div class="t" style="font-size:10.4px;height:10.4px;top:352.50px;left:1190.50px;width:200px;text-align:center;">n</div>
<div class="t" style="font-size:10.4px;height:10.4px;top:352.50px;left:1245.50px;width:200px;text-align:center;">n</div>
<div class="t" style="font-size:9.8px;height:9.8px;top:352.20px;left:1374.50px;">LT1=long, nicht als A/T erkannt, da auf weitere Bestätigung gewartet</div>
<div class="t" style="font-size:9.6px;height:9.6px;top:368.30px;left:195.50px;width:200px;text-align:center;">12.03.26</div>
<div class="t" style="font-size:9.6px;height:9.6px;top:368.30px;left:267.00px;width:200px;text-align:center;">13:30-14:30</div>
<div class="t" style="font-size:9.6px;height:9.6px;top:368.30px;left:355.00px;width:200px;text-align:center;">EUR-USD</div>
<div class="t" style="font-size:9.6px;height:9.6px;top:368.30px;left:423.40px;width:200px;text-align:center;">long</div>
<div class="t" style="font-size:9.6px;height:9.6px;top:368.30px;left:488.00px;width:200px;text-align:center;">A-VWAP</div>
<div class="t" style="font-size:9.6px;height:9.6px;top:368.30px;left:567.00px;width:200px;text-align:center;letter-spacing:0.04px">color switch</div>
<div class="t" style="font-size:9.6px;height:9.6px;top:368.30px;left:631.00px;width:200px;text-align:center;">100</div>
<div class="t" style="font-size:9.6px;height:9.6px;top:368.30px;left:672.00px;width:200px;text-align:center;">6,41</div>
<div class="t" style="font-size:9.6px;height:9.6px;top:368.30px;left:712.40px;width:200px;text-align:center;">7,06</div>
<div class="t" style="font-size:9.6px;height:9.6px;top:368.30px;left:810.00px;width:200px;text-align:center;">641</div>
<div class="t" style="font-size:9.6px;height:9.6px;top:368.30px;left:867.50px;width:200px;text-align:center;">65</div>
<div class="t" style="font-size:9.6px;height:9.6px;top:368.30px;left:937.00px;width:200px;text-align:center;color:#1a1a1a;">TRADED</div>
<div class="t" style="font-size:7.7px;height:7.7px;top:369.75px;left:1016.50px;width:200px;text-align:center;">1. impression</div>
<div class="t" style="font-size:10.4px;height:10.4px;top:368.50px;left:1080.50px;width:200px;text-align:center;">n</div>
<div class="t" style="font-size:10.4px;height:10.4px;top:368.50px;left:1135.50px;width:200px;text-align:center;">y</div>
<div class="t" style="font-size:10.4px;height:10.4px;top:368.50px;left:1190.50px;width:200px;text-align:center;">n</div>
<div class="t" style="font-size:10.4px;height:10.4px;top:368.50px;left:1245.50px;width:200px;text-align:center;">n</div>
<div class="t" style="font-size:9.8px;height:9.8px;top:368.20px;left:1374.50px;">T1=long, TP, CRV 1:6,41, HTs + RÜ+ zeites Eintauchen in AWVAP</div>
<div class="t" style="font-size:9.6px;height:9.6px;top:384.30px;left:195.50px;width:200px;text-align:center;">12.03.26</div>
<div class="t" style="font-size:9.6px;height:9.6px;top:384.30px;left:267.00px;width:200px;text-align:center;">13:30-14:30</div>
<div class="t" style="font-size:9.6px;height:9.6px;top:384.30px;left:355.00px;width:200px;text-align:center;">EUR-USD</div>
<div class="t" style="font-size:9.6px;height:9.6px;top:384.30px;left:423.40px;width:200px;text-align:center;">long</div>
<div class="t" style="font-size:9.6px;height:9.6px;top:384.30px;left:488.00px;width:200px;text-align:center;">A-VWAP</div>
<div class="t" style="font-size:9.6px;height:9.6px;top:384.30px;left:567.00px;width:200px;text-align:center;letter-spacing:0.04px">color switch</div>
<div class="t" style="font-size:9.6px;height:9.6px;top:384.30px;left:631.00px;width:200px;text-align:center;">100</div>
<div class="t" style="font-size:9.6px;height:9.6px;top:384.30px;left:672.00px;width:200px;text-align:center;">5,05</div>
<div class="t" style="font-size:9.6px;height:9.6px;top:384.30px;left:712.40px;width:200px;text-align:center;">5,6</div>
<div class="t" style="font-size:9.6px;height:9.6px;top:384.30px;left:810.00px;width:200px;text-align:center;">505</div>
<div class="t" style="font-size:9.6px;height:9.6px;top:384.30px;left:867.50px;width:200px;text-align:center;">55</div>
<div class="t" style="font-size:9.6px;height:9.6px;top:384.30px;left:937.00px;width:200px;text-align:center;color:#7cba45;">TP-ANALYSE</div>
<div class="t" style="font-size:7.7px;height:7.7px;top:385.75px;left:1016.50px;width:200px;text-align:center;">1. impression</div>
<div class="t" style="font-size:10.4px;height:10.4px;top:384.50px;left:1080.50px;width:200px;text-align:center;">n</div>
<div class="t" style="font-size:10.4px;height:10.4px;top:384.50px;left:1135.50px;width:200px;text-align:center;">y</div>
<div class="t" style="font-size:10.4px;height:10.4px;top:384.50px;left:1190.50px;width:200px;text-align:center;">n</div>
<div class="t" style="font-size:10.4px;height:10.4px;top:384.50px;left:1245.50px;width:200px;text-align:center;">n</div>
<div class="t" style="font-size:9.8px;height:9.8px;top:384.20px;left:1374.50px;">A1=long, TP, CRV 1:5,05, HTs + RÜ+ drittes Eintauchen in AWVAP</div>
<div class="t" style="font-size:9.6px;height:9.6px;top:400.30px;left:195.50px;width:200px;text-align:center;">12.03.26</div>
<div class="t" style="font-size:9.6px;height:9.6px;top:400.30px;left:267.00px;width:200px;text-align:center;">13:30-14:30</div>
<div class="t" style="font-size:9.6px;height:9.6px;top:400.30px;left:355.00px;width:200px;text-align:center;">EUR-USD</div>
<div class="t" style="font-size:9.6px;height:9.6px;top:400.30px;left:423.40px;width:200px;text-align:center;">long</div>
<div class="t" style="font-size:9.6px;height:9.6px;top:400.30px;left:488.00px;width:200px;text-align:center;">Pullback</div>
<div class="t" style="font-size:9.6px;height:9.6px;top:400.30px;left:567.00px;width:200px;text-align:center;letter-spacing:0.04px">color switch</div>
<div class="t" style="font-size:9.6px;height:9.6px;top:400.30px;left:631.00px;width:200px;text-align:center;">100</div>
<div class="t" style="font-size:9.6px;height:9.6px;top:400.30px;left:672.00px;width:200px;text-align:center;">5</div>
<div class="t" style="font-size:9.6px;height:9.6px;top:400.30px;left:810.00px;width:200px;text-align:center;">500</div>
<div class="t" style="font-size:9.6px;height:9.6px;top:400.30px;left:937.00px;width:200px;text-align:center;color:#7b4fc4;">Learn-Trade</div>
<div class="t" style="font-size:7.7px;height:7.7px;top:401.75px;left:1016.50px;width:200px;text-align:center;">1. impression</div>
<div class="t" style="font-size:10.4px;height:10.4px;top:400.50px;left:1080.50px;width:200px;text-align:center;">n</div>
<div class="t" style="font-size:10.4px;height:10.4px;top:400.50px;left:1135.50px;width:200px;text-align:center;">y</div>
<div class="t" style="font-size:10.4px;height:10.4px;top:400.50px;left:1190.50px;width:200px;text-align:center;">n</div>
<div class="t" style="font-size:10.4px;height:10.4px;top:400.50px;left:1245.50px;width:200px;text-align:center;">n</div>
<div class="t" style="font-size:9.8px;height:9.8px;top:400.20px;left:1374.50px;">LT2=long, nicht als A/T erkannt, da nicht in AWVAP eingetaucht</div>
<div class="t" style="font-size:9.6px;height:9.6px;top:416.30px;left:195.50px;width:200px;text-align:center;">12.03.26</div>
<div class="t" style="font-size:9.6px;height:9.6px;top:416.30px;left:267.00px;width:200px;text-align:center;">13:30-14:30</div>
<div class="t" style="font-size:9.6px;height:9.6px;top:416.30px;left:355.00px;width:200px;text-align:center;">EUR-USD</div>
<div class="t" style="font-size:9.6px;height:9.6px;top:416.30px;left:423.40px;width:200px;text-align:center;">short</div>
<div class="t" style="font-size:9.6px;height:9.6px;top:416.30px;left:488.00px;width:200px;text-align:center;">Pullback</div>
<div class="t" style="font-size:9.6px;height:9.6px;top:416.30px;left:567.00px;width:200px;text-align:center;letter-spacing:0.04px">color switch</div>
<div class="t" style="font-size:9.6px;height:9.6px;top:416.30px;left:631.00px;width:200px;text-align:center;">100</div>
<div class="t" style="font-size:9.6px;height:9.6px;top:416.30px;left:672.00px;width:200px;text-align:center;">5</div>
<div class="t" style="font-size:9.6px;height:9.6px;top:416.30px;left:810.00px;width:200px;text-align:center;">500</div>
<div class="t" style="font-size:9.6px;height:9.6px;top:416.30px;left:937.00px;width:200px;text-align:center;color:#7b4fc4;">Learn-Trade</div>
<div class="t" style="font-size:8.6px;height:8.6px;top:416.50px;left:1016.50px;width:200px;text-align:center;-webkit-text-stroke:0;color:#222">X</div>
<div class="t" style="font-size:10.4px;height:10.4px;top:416.50px;left:1080.50px;width:200px;text-align:center;">n</div>
<div class="t" style="font-size:10.4px;height:10.4px;top:416.50px;left:1135.50px;width:200px;text-align:center;">n</div>
<div class="t" style="font-size:10.4px;height:10.4px;top:416.50px;left:1190.50px;width:200px;text-align:center;">n</div>
<div class="t" style="font-size:10.4px;height:10.4px;top:416.50px;left:1245.50px;width:200px;text-align:center;">n</div>
<div class="t" style="font-size:9.8px;height:9.8px;top:416.20px;left:1374.50px;">LT3=short, nicht als A/T erkannt, da zu wenig Signale für Short-Trade</div>
<div class="t" style="font-size:9.6px;height:9.6px;top:432.30px;left:195.50px;width:200px;text-align:center;">12.03.26</div>
<div class="t" style="font-size:9.6px;height:9.6px;top:432.30px;left:267.00px;width:200px;text-align:center;">13:30-14:30</div>
<div class="t" style="font-size:9.6px;height:9.6px;top:432.30px;left:355.00px;width:200px;text-align:center;">EUR-USD</div>
<div class="t" style="font-size:9.6px;height:9.6px;top:432.30px;left:423.40px;width:200px;text-align:center;">short</div>
<div class="t" style="font-size:9.6px;height:9.6px;top:432.30px;left:488.00px;width:200px;text-align:center;">Pullback</div>
<div class="t" style="font-size:9.6px;height:9.6px;top:432.30px;left:567.00px;width:200px;text-align:center;letter-spacing:0.04px">color switch</div>
<div class="t" style="font-size:9.6px;height:9.6px;top:432.30px;left:631.00px;width:200px;text-align:center;">100</div>
<div class="t" style="font-size:9.6px;height:9.6px;top:432.30px;left:672.00px;width:200px;text-align:center;">5</div>
<div class="t" style="font-size:9.6px;height:9.6px;top:432.30px;left:810.00px;width:200px;text-align:center;">500</div>
<div class="t" style="font-size:9.6px;height:9.6px;top:432.30px;left:937.00px;width:200px;text-align:center;color:#7b4fc4;">Learn-Trade</div>
<div class="t" style="font-size:8.6px;height:8.6px;top:432.50px;left:1016.50px;width:200px;text-align:center;-webkit-text-stroke:0;color:#222">X</div>
<div class="t" style="font-size:10.4px;height:10.4px;top:432.50px;left:1080.50px;width:200px;text-align:center;">n</div>
<div class="t" style="font-size:10.4px;height:10.4px;top:432.50px;left:1135.50px;width:200px;text-align:center;">y</div>
<div class="t" style="font-size:10.4px;height:10.4px;top:432.50px;left:1190.50px;width:200px;text-align:center;">n</div>
<div class="t" style="font-size:10.4px;height:10.4px;top:432.50px;left:1245.50px;width:200px;text-align:center;">n</div>
<div class="t" style="font-size:9.8px;height:9.8px;top:432.20px;left:1374.50px;">LT4=short, nicht als A/T erkannt, da Kurs stark fallend (kein TRend)</div>
<div class="t" style="font-size:9.6px;height:9.6px;top:464.55px;left:195.50px;width:200px;text-align:center;">13.03.26</div>
<div class="t" style="font-size:9.6px;height:9.6px;top:464.55px;left:267.00px;width:200px;text-align:center;">17:00-18:00</div>
<div class="t" style="font-size:9.6px;height:9.6px;top:464.55px;left:355.00px;width:200px;text-align:center;">SP500</div>
<div class="t" style="font-size:9.6px;height:9.6px;top:464.55px;left:423.40px;width:200px;text-align:center;">long</div>
<div class="t" style="font-size:9.6px;height:9.6px;top:464.55px;left:488.00px;width:200px;text-align:center;">A-VWAP</div>
<div class="t" style="font-size:9.6px;height:9.6px;top:464.55px;left:567.00px;width:200px;text-align:center;letter-spacing:0.04px">color switch</div>
<div class="t" style="font-size:9.6px;height:9.6px;top:464.55px;left:631.00px;width:200px;text-align:center;">100</div>
<div class="t" style="font-size:9.6px;height:9.6px;top:464.55px;left:672.00px;width:200px;text-align:center;">5</div>
<div class="t" style="font-size:9.6px;height:9.6px;top:464.55px;left:810.00px;width:200px;text-align:center;">500</div>
<div class="t" style="font-size:9.6px;height:9.6px;top:464.55px;left:937.00px;width:200px;text-align:center;color:#7b4fc4;">Learn-Trade</div>
<div class="t" style="font-size:7.7px;height:7.7px;top:466.00px;left:1016.50px;width:200px;text-align:center;">1. impression</div>
<div class="t" style="font-size:10.4px;height:10.4px;top:464.75px;left:1080.50px;width:200px;text-align:center;">n</div>
<div class="t" style="font-size:10.4px;height:10.4px;top:464.75px;left:1135.50px;width:200px;text-align:center;">y</div>
<div class="t" style="font-size:10.4px;height:10.4px;top:464.75px;left:1190.50px;width:200px;text-align:center;">n</div>
<div class="t" style="font-size:10.4px;height:10.4px;top:464.75px;left:1245.50px;width:200px;text-align:center;">n</div>
<div class="t" style="font-size:9.8px;height:9.8px;top:464.45px;left:1374.50px;">LT1=long, verkürzt, HT, 1:5, nicht als A/T erkannt, da in NTA</div>
<div class="t" style="font-size:9.6px;height:9.6px;top:480.80px;left:195.50px;width:200px;text-align:center;">13.03.26</div>
<div class="t" style="font-size:9.6px;height:9.6px;top:480.80px;left:267.00px;width:200px;text-align:center;">17:00-18:00</div>
<div class="t" style="font-size:9.6px;height:9.6px;top:480.80px;left:355.00px;width:200px;text-align:center;">SP500</div>
<div class="t" style="font-size:9.6px;height:9.6px;top:480.80px;left:423.40px;width:200px;text-align:center;">long</div>
<div class="t" style="font-size:9.6px;height:9.6px;top:480.80px;left:488.00px;width:200px;text-align:center;">A-VWAP</div>
<div class="t" style="font-size:9.6px;height:9.6px;top:480.80px;left:567.00px;width:200px;text-align:center;letter-spacing:0.04px">color switch</div>
<div class="t" style="font-size:9.6px;height:9.6px;top:480.80px;left:631.00px;width:200px;text-align:center;">100</div>
<div class="t" style="font-size:9.6px;height:9.6px;top:480.80px;left:672.00px;width:200px;text-align:center;">5</div>
<div class="t" style="font-size:9.6px;height:9.6px;top:480.80px;left:810.00px;width:200px;text-align:center;">500</div>
<div class="t" style="font-size:9.6px;height:9.6px;top:480.80px;left:937.00px;width:200px;text-align:center;color:#7b4fc4;">Learn-Trade</div>
<div class="t" style="font-size:7.7px;height:7.7px;top:482.25px;left:1016.50px;width:200px;text-align:center;">1. impression</div>
<div class="t" style="font-size:10.4px;height:10.4px;top:481.00px;left:1080.50px;width:200px;text-align:center;">n</div>
<div class="t" style="font-size:10.4px;height:10.4px;top:481.00px;left:1135.50px;width:200px;text-align:center;">y</div>
<div class="t" style="font-size:10.4px;height:10.4px;top:481.00px;left:1190.50px;width:200px;text-align:center;">n</div>
<div class="t" style="font-size:10.4px;height:10.4px;top:481.00px;left:1245.50px;width:200px;text-align:center;">n</div>
<div class="t" style="font-size:9.8px;height:9.8px;top:480.70px;left:1374.50px;">LT2=long, HT, 1:5, nicht als A/T erkannt, da in NTA</div>
<div class="t" style="font-size:9.6px;height:9.6px;top:496.80px;left:195.50px;width:200px;text-align:center;">13.03.26</div>
<div class="t" style="font-size:9.6px;height:9.6px;top:496.80px;left:267.00px;width:200px;text-align:center;">17:00-18:00</div>
<div class="t" style="font-size:9.6px;height:9.6px;top:496.80px;left:355.00px;width:200px;text-align:center;">SP500</div>
<div class="t" style="font-size:9.6px;height:9.6px;top:496.80px;left:423.40px;width:200px;text-align:center;">long</div>
<div class="t" style="font-size:9.6px;height:9.6px;top:496.80px;left:488.00px;width:200px;text-align:center;">A-VWAP</div>
<div class="t" style="font-size:9.6px;height:9.6px;top:496.80px;left:567.00px;width:200px;text-align:center;letter-spacing:0.04px">color switch</div>
<div class="t" style="font-size:9.6px;height:9.6px;top:496.80px;left:631.00px;width:200px;text-align:center;">100</div>
<div class="t" style="font-size:9.6px;height:9.6px;top:496.80px;left:672.00px;width:200px;text-align:center;">5</div>
<div class="t" style="font-size:9.6px;height:9.6px;top:496.80px;left:810.00px;width:200px;text-align:center;">500</div>
<div class="t" style="font-size:9.6px;height:9.6px;top:496.80px;left:937.00px;width:200px;text-align:center;color:#7b4fc4;">Learn-Trade</div>
<div class="t" style="font-size:7.7px;height:7.7px;top:498.25px;left:1016.50px;width:200px;text-align:center;">1. impression</div>
<div class="t" style="font-size:10.4px;height:10.4px;top:497.00px;left:1080.50px;width:200px;text-align:center;">n</div>
<div class="t" style="font-size:10.4px;height:10.4px;top:497.00px;left:1135.50px;width:200px;text-align:center;">y</div>
<div class="t" style="font-size:10.4px;height:10.4px;top:497.00px;left:1190.50px;width:200px;text-align:center;">n</div>
<div class="t" style="font-size:10.4px;height:10.4px;top:497.00px;left:1245.50px;width:200px;text-align:center;">n</div>
<div class="t" style="font-size:9.8px;height:9.8px;top:496.70px;left:1374.50px;">LT3=long, HT, 1:5, nicht als A/T erkannt, da in NTA</div>
<div class="t" style="font-size:9.6px;height:9.6px;top:528.80px;left:154.50px;width:200px;text-align:center;">12</div>
<div class="t" style="font-size:9.6px;height:9.6px;top:528.80px;left:195.50px;width:200px;text-align:center;">18.03.26</div>
<div class="t" style="font-size:9.6px;height:9.6px;top:528.80px;left:267.00px;width:200px;text-align:center;">17:00-18:00</div>
<div class="t" style="font-size:9.6px;height:9.6px;top:528.80px;left:355.00px;width:200px;text-align:center;">SP500</div>
<div class="t" style="font-size:9.6px;height:9.6px;top:528.80px;left:423.40px;width:200px;text-align:center;">short</div>
<div class="t" style="font-size:9.6px;height:9.6px;top:528.80px;left:488.00px;width:200px;text-align:center;">Pullback</div>
<div class="t" style="font-size:9.6px;height:9.6px;top:528.80px;left:567.00px;width:200px;text-align:center;letter-spacing:0.04px">color switch</div>
<div class="t" style="font-size:9.6px;height:9.6px;top:528.80px;left:631.00px;width:200px;text-align:center;">100</div>
<div class="t" style="font-size:9.6px;height:9.6px;top:528.80px;left:672.00px;width:200px;text-align:center;">5</div>
<div class="t" style="font-size:9.6px;height:9.6px;top:528.80px;left:810.00px;width:200px;text-align:center;">500</div>
<div class="t" style="font-size:9.6px;height:9.6px;top:528.80px;left:937.00px;width:200px;text-align:center;color:#7b4fc4;">Learn-Trade</div>
<div class="t" style="font-size:8.6px;height:8.6px;top:529.00px;left:1016.50px;width:200px;text-align:center;-webkit-text-stroke:0;color:#222">X</div>
<div class="t" style="font-size:10.4px;height:10.4px;top:529.00px;left:1080.50px;width:200px;text-align:center;">n</div>
<div class="t" style="font-size:10.4px;height:10.4px;top:529.00px;left:1135.50px;width:200px;text-align:center;">n</div>
<div class="t" style="font-size:10.4px;height:10.4px;top:529.00px;left:1190.50px;width:200px;text-align:center;">n</div>
<div class="t" style="font-size:10.4px;height:10.4px;top:529.00px;left:1245.50px;width:200px;text-align:center;">n</div>
<div class="t" style="font-size:9.8px;height:9.8px;top:528.70px;left:1374.50px;">LT1=short, TH, nicht als A/T erkannt, da zu wenig Signale und in NTA</div>
<div class="t" style="font-size:9.6px;height:9.6px;top:544.80px;left:267.00px;width:200px;text-align:center;">17:00-18:00</div>
<div class="t" style="font-size:9.6px;height:9.6px;top:544.80px;left:355.00px;width:200px;text-align:center;">SP500</div>
<div class="t" style="font-size:9.6px;height:9.6px;top:544.80px;left:423.40px;width:200px;text-align:center;">short</div>
<div class="t" style="font-size:9.6px;height:9.6px;top:544.80px;left:488.00px;width:200px;text-align:center;">Pullback</div>
<div class="t" style="font-size:9.6px;height:9.6px;top:544.80px;left:567.00px;width:200px;text-align:center;letter-spacing:0.04px">color switch</div>
<div class="t" style="font-size:9.6px;height:9.6px;top:544.80px;left:631.00px;width:200px;text-align:center;">100</div>
<div class="t" style="font-size:9.6px;height:9.6px;top:544.80px;left:672.00px;width:200px;text-align:center;">5</div>
<div class="t" style="font-size:9.6px;height:9.6px;top:544.80px;left:810.00px;width:200px;text-align:center;">500</div>
<div class="t" style="font-size:9.6px;height:9.6px;top:544.80px;left:937.00px;width:200px;text-align:center;color:#7b4fc4;">Learn-Trade</div>
<div class="t" style="font-size:8.6px;height:8.6px;top:545.00px;left:1016.50px;width:200px;text-align:center;-webkit-text-stroke:0;color:#222">X</div>
<div class="t" style="font-size:10.4px;height:10.4px;top:545.00px;left:1080.50px;width:200px;text-align:center;">n</div>
<div class="t" style="font-size:10.4px;height:10.4px;top:545.00px;left:1135.50px;width:200px;text-align:center;">n</div>
<div class="t" style="font-size:10.4px;height:10.4px;top:545.00px;left:1190.50px;width:200px;text-align:center;">n</div>
<div class="t" style="font-size:10.4px;height:10.4px;top:545.00px;left:1245.50px;width:200px;text-align:center;">n</div>
<div class="t" style="font-size:9.8px;height:9.8px;top:544.70px;left:1374.50px;">LT2=short, TH, nicht als A/T erkannt, da zu wenig Signale und in NTA</div>
<div class="t" style="font-size:9.6px;height:9.6px;top:577.05px;left:154.50px;width:200px;text-align:center;">13</div>
<div class="t" style="font-size:9.6px;height:9.6px;top:577.05px;left:195.50px;width:200px;text-align:center;">24.03.26</div>
<div class="t" style="font-size:9.6px;height:9.6px;top:577.05px;left:267.00px;width:200px;text-align:center;">18:40-19:40</div>
<div class="t" style="font-size:9.6px;height:9.6px;top:577.05px;left:355.00px;width:200px;text-align:center;">SP500</div>
<div class="t" style="font-size:9.6px;height:9.6px;top:577.05px;left:423.40px;width:200px;text-align:center;">short</div>
<div class="t" style="font-size:9.6px;height:9.6px;top:577.05px;left:488.00px;width:200px;text-align:center;">A-VWAP</div>
<div class="t" style="font-size:9.6px;height:9.6px;top:577.05px;left:567.00px;width:200px;text-align:center;letter-spacing:0.04px">color switch</div>
<div class="t" style="font-size:9.6px;height:9.6px;top:577.05px;left:631.00px;width:200px;text-align:center;">100</div>
<div class="t" style="font-size:9.6px;height:9.6px;top:577.05px;left:672.00px;width:200px;text-align:center;">6,17</div>
<div class="t" style="font-size:9.6px;height:9.6px;top:577.05px;left:755.00px;width:200px;text-align:center;">0</div>
<div class="t" style="font-size:9.6px;height:9.6px;top:577.05px;left:810.00px;width:200px;text-align:center;">617</div>
<div class="t" style="font-size:9.6px;height:9.6px;top:577.05px;left:937.00px;width:200px;text-align:center;color:#1a1a1a;">TRADED</div>
<div class="t" style="font-size:7.7px;height:7.7px;top:578.50px;left:1016.50px;width:200px;text-align:center;">1. impression</div>
<div class="t" style="font-size:10.4px;height:10.4px;top:577.25px;left:1080.50px;width:200px;text-align:center;">n</div>
<div class="t" style="font-size:10.4px;height:10.4px;top:577.25px;left:1135.50px;width:200px;text-align:center;">y</div>
<div class="t" style="font-size:10.4px;height:10.4px;top:577.25px;left:1190.50px;width:200px;text-align:center;">y</div>
<div class="t" style="font-size:10.4px;height:10.4px;top:577.25px;left:1245.50px;width:200px;text-align:center;">y</div>
<div class="t" style="font-size:9.8px;height:9.8px;top:576.95px;left:1374.50px;">T1=short, TP, CRV 1:6,17, TH+RÜ+AV+MD short</div>
<div class="t" style="font-size:9.6px;height:9.6px;top:593.30px;left:195.50px;width:200px;text-align:center;">24.03.26</div>
<div class="t" style="font-size:9.6px;height:9.6px;top:593.30px;left:267.00px;width:200px;text-align:center;">18:40-19:40</div>
<div class="t" style="font-size:9.6px;height:9.6px;top:593.30px;left:355.00px;width:200px;text-align:center;">SP500</div>
<div class="t" style="font-size:9.6px;height:9.6px;top:593.30px;left:423.40px;width:200px;text-align:center;">long</div>
<div class="t" style="font-size:9.6px;height:9.6px;top:593.30px;left:488.00px;width:200px;text-align:center;">Pullback</div>
<div class="t" style="font-size:9.6px;height:9.6px;top:593.30px;left:567.00px;width:200px;text-align:center;letter-spacing:0.04px">color switch</div>
<div class="t" style="font-size:9.6px;height:9.6px;top:593.30px;left:631.00px;width:200px;text-align:center;">100</div>
<div class="t" style="font-size:9.6px;height:9.6px;top:593.30px;left:672.00px;width:200px;text-align:center;">5</div>
<div class="t" style="font-size:9.6px;height:9.6px;top:593.30px;left:810.00px;width:200px;text-align:center;">500</div>
<div class="t" style="font-size:9.6px;height:9.6px;top:593.30px;left:937.00px;width:200px;text-align:center;color:#7b4fc4;">Learn-Trade</div>
<div class="t" style="font-size:8.6px;height:8.6px;top:593.50px;left:1016.50px;width:200px;text-align:center;-webkit-text-stroke:0;color:#222">X</div>
<div class="t" style="font-size:10.4px;height:10.4px;top:593.50px;left:1080.50px;width:200px;text-align:center;">n</div>
<div class="t" style="font-size:10.4px;height:10.4px;top:593.50px;left:1135.50px;width:200px;text-align:center;">n</div>
<div class="t" style="font-size:10.4px;height:10.4px;top:593.50px;left:1190.50px;width:200px;text-align:center;">n</div>
<div class="t" style="font-size:10.4px;height:10.4px;top:593.50px;left:1245.50px;width:200px;text-align:center;">n</div>
<div class="t" style="font-size:9.8px;height:9.8px;top:593.20px;left:1374.50px;">LT1=long, 1:5, HT, nicht als A/T erkannt, da long und innerhalb NTA</div>
<div class="t" style="font-size:9.6px;height:9.6px;top:609.30px;left:195.50px;width:200px;text-align:center;">24.03.26</div>
<div class="t" style="font-size:9.6px;height:9.6px;top:609.30px;left:267.00px;width:200px;text-align:center;">18:40-19:40</div>
<div class="t" style="font-size:9.6px;height:9.6px;top:609.30px;left:355.00px;width:200px;text-align:center;">SP500</div>
<div class="t" style="font-size:9.6px;height:9.6px;top:609.30px;left:423.40px;width:200px;text-align:center;">short</div>
<div class="t" style="font-size:9.6px;height:9.6px;top:609.30px;left:488.00px;width:200px;text-align:center;">A-VWAP</div>
<div class="t" style="font-size:9.6px;height:9.6px;top:609.30px;left:567.00px;width:200px;text-align:center;letter-spacing:0.04px">color switch</div>
<div class="t" style="font-size:9.6px;height:9.6px;top:609.30px;left:631.00px;width:200px;text-align:center;">100</div>
<div class="t" style="font-size:9.6px;height:9.6px;top:609.30px;left:672.00px;width:200px;text-align:center;">5</div>
<div class="t" style="font-size:9.6px;height:9.6px;top:609.30px;left:810.00px;width:200px;text-align:center;">500</div>
<div class="t" style="font-size:9.6px;height:9.6px;top:609.30px;left:937.00px;width:200px;text-align:center;color:#7b4fc4;">Learn-Trade</div>
<div class="t" style="font-size:7.7px;height:7.7px;top:610.75px;left:1016.50px;width:200px;text-align:center;">1. impression</div>
<div class="t" style="font-size:10.4px;height:10.4px;top:609.50px;left:1080.50px;width:200px;text-align:center;">n</div>
<div class="t" style="font-size:10.4px;height:10.4px;top:609.50px;left:1135.50px;width:200px;text-align:center;">n</div>
<div class="t" style="font-size:10.4px;height:10.4px;top:609.50px;left:1190.50px;width:200px;text-align:center;">n</div>
<div class="t" style="font-size:10.4px;height:10.4px;top:609.50px;left:1245.50px;width:200px;text-align:center;">y</div>
<div class="t" style="font-size:9.8px;height:9.8px;top:609.20px;left:1374.50px;">LT2=short, 1:5, TH, nicht als A/T erkannt, da zu wenig Signale</div>
<div class="t" style="font-size:9.6px;height:9.6px;top:625.30px;left:195.50px;width:200px;text-align:center;">24.03.26</div>
<div class="t" style="font-size:9.6px;height:9.6px;top:625.30px;left:267.00px;width:200px;text-align:center;">18:40-19:40</div>
<div class="t" style="font-size:9.6px;height:9.6px;top:625.30px;left:355.00px;width:200px;text-align:center;">SP500</div>
<div class="t" style="font-size:9.6px;height:9.6px;top:625.30px;left:423.40px;width:200px;text-align:center;">short</div>
<div class="t" style="font-size:9.6px;height:9.6px;top:625.30px;left:488.00px;width:200px;text-align:center;">A-VWAP</div>
<div class="t" style="font-size:9.6px;height:9.6px;top:625.30px;left:567.00px;width:200px;text-align:center;letter-spacing:0.04px">color switch</div>
<div class="t" style="font-size:9.6px;height:9.6px;top:625.30px;left:631.00px;width:200px;text-align:center;">100</div>
<div class="t" style="font-size:9.6px;height:9.6px;top:625.30px;left:672.00px;width:200px;text-align:center;">4,17</div>
<div class="t" style="font-size:9.6px;height:9.6px;top:625.30px;left:810.00px;width:200px;text-align:center;">417</div>
<div class="t" style="font-size:9.6px;height:9.6px;top:625.30px;left:937.00px;width:200px;text-align:center;color:#7cba45;">TP-ANALYSE</div>
<div class="t" style="font-size:7.7px;height:7.7px;top:626.75px;left:1016.50px;width:200px;text-align:center;">1. impression</div>
<div class="t" style="font-size:10.4px;height:10.4px;top:625.50px;left:1080.50px;width:200px;text-align:center;">n</div>
<div class="t" style="font-size:10.4px;height:10.4px;top:625.50px;left:1135.50px;width:200px;text-align:center;">y</div>
<div class="t" style="font-size:10.4px;height:10.4px;top:625.50px;left:1190.50px;width:200px;text-align:center;">n</div>
<div class="t" style="font-size:10.4px;height:10.4px;top:625.50px;left:1245.50px;width:200px;text-align:center;">y</div>
<div class="t" style="font-size:9.8px;height:9.8px;top:625.20px;left:1374.50px;">A1=short, TP, CRV 1:4,17, TH+RÜ + zweites Eintauchen AV</div>
<div class="t" style="font-size:9.6px;height:9.6px;top:641.30px;left:195.50px;width:200px;text-align:center;">24.03.26</div>
<div class="t" style="font-size:9.6px;height:9.6px;top:641.30px;left:267.00px;width:200px;text-align:center;">18:40-19:40</div>
<div class="t" style="font-size:9.6px;height:9.6px;top:641.30px;left:355.00px;width:200px;text-align:center;">SP500</div>
<div class="t" style="font-size:9.6px;height:9.6px;top:641.30px;left:423.40px;width:200px;text-align:center;">short</div>
<div class="t" style="font-size:9.6px;height:9.6px;top:641.30px;left:488.00px;width:200px;text-align:center;">Pullback</div>
<div class="t" style="font-size:9.6px;height:9.6px;top:641.30px;left:567.00px;width:200px;text-align:center;letter-spacing:0.04px">color switch</div>
<div class="t" style="font-size:9.6px;height:9.6px;top:641.30px;left:631.00px;width:200px;text-align:center;">100</div>
<div class="t" style="font-size:9.6px;height:9.6px;top:641.30px;left:672.00px;width:200px;text-align:center;">5</div>
<div class="t" style="font-size:9.6px;height:9.6px;top:641.30px;left:810.00px;width:200px;text-align:center;">500</div>
<div class="t" style="font-size:9.6px;height:9.6px;top:641.30px;left:937.00px;width:200px;text-align:center;color:#7b4fc4;">Learn-Trade</div>
<div class="t" style="font-size:7.7px;height:7.7px;top:642.75px;left:1016.50px;width:200px;text-align:center;">1. impression</div>
<div class="t" style="font-size:10.4px;height:10.4px;top:641.50px;left:1080.50px;width:200px;text-align:center;">y</div>
<div class="t" style="font-size:10.4px;height:10.4px;top:641.50px;left:1135.50px;width:200px;text-align:center;">y</div>
<div class="t" style="font-size:10.4px;height:10.4px;top:641.50px;left:1190.50px;width:200px;text-align:center;">n</div>
<div class="t" style="font-size:10.4px;height:10.4px;top:641.50px;left:1245.50px;width:200px;text-align:center;">y</div>
<div class="t" style="font-size:9.8px;height:9.8px;top:641.20px;left:1374.50px;">LT3=short, 1:5, TH, nicht als A/T erkannt, da nicht in AV eingetaucht</div>
<div class="t" style="font-size:9.6px;height:9.6px;top:657.30px;left:195.50px;width:200px;text-align:center;">24.03.26</div>
<div class="t" style="font-size:9.6px;height:9.6px;top:657.30px;left:267.00px;width:200px;text-align:center;">18:40-19:40</div>
<div class="t" style="font-size:9.6px;height:9.6px;top:657.30px;left:355.00px;width:200px;text-align:center;">SP500</div>
<div class="t" style="font-size:9.6px;height:9.6px;top:657.30px;left:423.40px;width:200px;text-align:center;">short</div>
<div class="t" style="font-size:9.6px;height:9.6px;top:657.30px;left:488.00px;width:200px;text-align:center;">A-VWAP</div>
<div class="t" style="font-size:9.6px;height:9.6px;top:657.30px;left:567.00px;width:200px;text-align:center;letter-spacing:0.04px">color switch</div>
<div class="t" style="font-size:9.6px;height:9.6px;top:657.30px;left:631.00px;width:200px;text-align:center;">100</div>
<div class="t" style="font-size:9.6px;height:9.6px;top:657.30px;left:672.00px;width:200px;text-align:center;">5,67</div>
<div class="t" style="font-size:9.6px;height:9.6px;top:657.30px;left:810.00px;width:200px;text-align:center;">567</div>
<div class="t" style="font-size:9.6px;height:9.6px;top:657.30px;left:937.00px;width:200px;text-align:center;color:#ee1c25;">SL-ANALYSE</div>
<div class="t" style="font-size:7.7px;height:7.7px;top:658.75px;left:1016.50px;width:200px;text-align:center;">1. impression</div>
<div class="t" style="font-size:10.4px;height:10.4px;top:657.50px;left:1080.50px;width:200px;text-align:center;">y</div>
<div class="t" style="font-size:10.4px;height:10.4px;top:657.50px;left:1135.50px;width:200px;text-align:center;">y</div>
<div class="t" style="font-size:10.4px;height:10.4px;top:657.50px;left:1190.50px;width:200px;text-align:center;">n</div>
<div class="t" style="font-size:10.4px;height:10.4px;top:657.50px;left:1245.50px;width:200px;text-align:center;">y</div>
<div class="t" style="font-size:9.8px;height:9.8px;top:657.20px;left:1374.50px;">A2=short, SL, HH + AV, Kurs lief long</div>
<div class="a" style="left:126px;top:64px;width:101px;height:11px;background:#ececee"></div>
<div class="a" style="left:27px;top:64.5px;width:202px;height:12.5px;border-left:1.8px solid #111;border-right:1.8px solid #111;border-bottom:1.8px solid #111;"></div>
<div class="t" style="font-size:9.6px;height:9.6px;top:66.00px;left:-75.70px;width:200px;text-align:right;">Name</div>
<div class="t" style="font-size:7.6px;height:7.6px;top:66.50px;left:77.50px;width:200px;text-align:center;">Andreas Sluga</div>
<div class="a" style="left:126px;top:101px;width:101px;height:41px;background:#ececee"></div>
<div class="a" style="left:126px;top:154.5px;width:101px;height:55px;background:#ececee"></div>
<div class="a" style="left:126px;top:225px;width:101px;height:13.5px;background:#ececee"></div>
<div class="a" style="left:126.5px;top:155px;width:100.5px;height:13.7px;border:1px dotted #444"></div>
<div class="a" style="left:27px;top:88px;width:202px;height:152px;border-top:1.8px solid #111;border-left:1.8px solid #111;border-right:1.8px solid #111;border-bottom:1.8px solid #111;"></div>
<div class="t" style="font-size:9.2px;height:9.2px;top:90.90px;left:28.00px;width:200px;text-align:center;font-weight:bold;">Trade statistic</div>
<div class="t" style="font-size:9.6px;height:9.6px;top:103.70px;left:-75.70px;width:200px;text-align:right;">Trade TP</div>
<div class="t" style="font-size:7.5px;height:7.5px;top:105.45px;left:77.50px;width:200px;text-align:center;color:#86b46c;">$3.773,00</div>
<div class="t" style="font-size:9.6px;height:9.6px;top:116.90px;left:-75.70px;width:200px;text-align:right;">Trade SL</div>
<div class="t" style="font-size:7.5px;height:7.5px;top:118.65px;left:77.50px;width:200px;text-align:center;color:#ee2030;">-$200,00</div>
<div class="t" style="font-size:9.6px;height:9.6px;top:130.60px;left:-75.70px;width:200px;text-align:right;">Week total</div>
<div class="t" style="font-size:7.5px;height:7.5px;top:132.35px;left:77.50px;width:200px;text-align:center;color:#2222e0;">$3.573,00</div>
<div class="t" style="font-size:9.6px;height:9.6px;top:156.80px;left:-75.70px;width:200px;text-align:right;">Number Trades</div>
<div class="t" style="font-size:7.9px;height:7.9px;top:158.35px;left:77.50px;width:200px;text-align:center;color:#111;">8</div>
<div class="t" style="font-size:9.6px;height:9.6px;top:170.40px;left:-75.70px;width:200px;text-align:right;">Winning Trades</div>
<div class="t" style="font-size:8.2px;height:8.2px;top:171.80px;left:77.50px;width:200px;text-align:center;color:#7cb46a;">6</div>
<div class="t" style="font-size:9.6px;height:9.6px;top:183.90px;left:-75.70px;width:200px;text-align:right;">Losing Trades</div>
<div class="t" style="font-size:8.2px;height:8.2px;top:185.30px;left:77.50px;width:200px;text-align:center;color:#ee3040;">2</div>
<div class="t" style="font-size:9.6px;height:9.6px;top:197.20px;left:-75.70px;width:200px;text-align:right;">Strike rate</div>
<div class="t" style="font-size:7.5px;height:7.5px;top:198.95px;left:77.50px;width:200px;text-align:center;color:#111;">75%</div>
<div class="t" style="font-size:7.7px;height:7.7px;top:228.95px;left:-74.70px;width:200px;text-align:right;">Max. RR potential</div>
<div class="t" style="font-size:7.5px;height:7.5px;top:229.05px;left:77.50px;width:200px;text-align:center;color:#6f8fd4;">$2.418,00</div>
<div class="a" style="left:126px;top:267.7px;width:101px;height:49px;background:#ececee"></div>
<div class="a" style="left:126px;top:332.4px;width:101px;height:63.6px;background:#ececee"></div>
<div class="a" style="left:126px;top:332.4px;width:102px;height:17px;border:1px dotted #444"></div>
<div class="a" style="left:27px;top:253px;width:202px;height:144.5px;border-top:1.8px solid #111;border-left:1.8px solid #111;border-right:1.8px solid #111;border-bottom:1.8px solid #111;"></div>
<div class="t" style="font-size:9.2px;height:9.2px;top:256.60px;left:28.00px;width:200px;text-align:center;font-weight:bold;">Analyse statistic</div>
<div class="t" style="font-size:9.6px;height:9.6px;top:272.70px;left:-75.70px;width:200px;text-align:right;">Analyse TP</div>
<div class="t" style="font-size:7.5px;height:7.5px;top:273.75px;left:77.50px;width:200px;text-align:center;color:#2a8878;">$1.522,00</div>
<div class="t" style="font-size:9.6px;height:9.6px;top:288.50px;left:-75.70px;width:200px;text-align:right;">Analyse SL</div>
<div class="t" style="font-size:7.5px;height:7.5px;top:289.55px;left:77.50px;width:200px;text-align:center;color:#2a8878;">$0,00</div>
<div class="t" style="font-size:9.6px;height:9.6px;top:304.50px;left:-75.70px;width:200px;text-align:right;">Total</div>
<div class="t" style="font-size:7.5px;height:7.5px;top:305.55px;left:77.50px;width:200px;text-align:center;color:#2222e0;">$1.522,00</div>
<div class="t" style="font-size:9.6px;height:9.6px;top:336.50px;left:-75.70px;width:200px;text-align:right;">Number Analyse</div>
<div class="t" style="font-size:8.6px;height:8.6px;top:337.00px;left:77.50px;width:200px;text-align:center;color:#111;">4</div>
<div class="t" style="font-size:9.6px;height:9.6px;top:352.70px;left:-75.70px;width:200px;text-align:right;">TP-Analyse</div>
<div class="t" style="font-size:8.6px;height:8.6px;top:353.20px;left:77.50px;width:200px;text-align:center;color:#7cb46a;">3</div>
<div class="t" style="font-size:9.6px;height:9.6px;top:368.70px;left:-75.70px;width:200px;text-align:right;">SL-Analyse</div>
<div class="t" style="font-size:8.6px;height:8.6px;top:369.20px;left:77.50px;width:200px;text-align:center;color:#ee3040;">1</div>
<div class="t" style="font-size:9.6px;height:9.6px;top:384.50px;left:-75.70px;width:200px;text-align:right;">Analyse strike rate</div>
<div class="t" style="font-size:7.5px;height:7.5px;top:385.55px;left:77.50px;width:200px;text-align:center;color:#111;">75%</div>
<div class="a" style="left:27px;top:413px;width:202px;height:33px;border-top:1.8px solid #111;border-left:1.8px solid #111;border-right:1.8px solid #111;border-bottom:1.8px solid #111;"></div>
<div class="t" style="font-size:9.6px;height:9.6px;top:417.20px;left:-75.70px;width:200px;text-align:right;">Level upgrade</div>
<div class="t" style="font-size:9.2px;height:9.2px;top:417.10px;left:77.50px;width:200px;text-align:center;color:#4d6cd0;font-weight:bold;">07.02.26</div>
<div class="t" style="font-size:9.6px;height:9.6px;top:432.80px;left:-75.70px;width:200px;text-align:right;">Current level</div>
<div class="t" style="font-size:9.4px;height:9.4px;top:432.90px;left:77.50px;width:200px;text-align:center;">3</div>
<div class="a" style="left:28px;top:462px;width:200px;height:16px;background:#efefef"></div>
<div class="a" style="left:27px;top:461.5px;width:202px;height:145.0px;border-top:1.8px solid #111;border-left:1.8px solid #111;border-right:1.8px solid #111;border-bottom:1.8px solid #111;"></div>
<div class="t" style="font-size:9.2px;height:9.2px;top:465.40px;left:27.70px;width:200px;text-align:center;font-weight:bold;">Weekly task</div>
<div class="t" style="font-size:7.7px;height:7.7px;top:480.15px;left:30.00px;">Aufgabe lvl.3</div>
<div class="a" style="left:28px;top:639px;width:100px;height:40px;background:#eeeeee"></div>
<div class="a" style="left:27px;top:621.5px;width:202px;height:78.5px;border-top:1.8px solid #111;border-left:1.8px solid #111;border-right:1.8px solid #111;border-bottom:1.8px solid #111;"></div>
<div class="a" style="left:27px;top:637.6px;width:202px;height:1.8px;background:#111"></div>
<div class="t" style="font-size:9.2px;height:9.2px;top:626.20px;left:40.90px;font-weight:bold;">Legend / Explain</div>
<div class="t" style="font-size:8.1px;height:8.1px;top:642.95px;left:30.00px;">Date</div>
<div class="t" style="font-size:8.1px;height:8.1px;top:657.95px;left:30.00px;">Time</div>
<div class="t" style="font-size:7px;height:7px;top:642.00px;left:128.70px;">Trading Tag</div>
<div class="t" style="font-size:7px;height:7px;top:658.50px;left:128.70px;">Rechnerzeit</div>
<svg class="a" style="left:0;top:0" width="260" height="673" viewBox="0 0 260 673"><g fill="none" stroke="#4a67c6" stroke-width="1.8" stroke-linejoin="round"><path d="M49.8 159.3 H41 Q38.8 159.3 38.8 161.5 V339.5 Q38.8 341.8 41 341.8 H49.5"/><path d="M48 172.7 H37.5 Q35.5 172.7 35.5 174.7 V352 Q35.5 354.2 37.7 354.2 H47.7"/><path d="M28 241 H38.8"/><path d="M24 255.4 H35.5"/></g></svg>
</div></div>
<svg class="a" style="left:1200px;top:100px" width="140" height="500" viewBox="1200 100 140 500"><g fill="none" stroke="#f23fd0" stroke-width="2.6" stroke-linecap="round" stroke-linejoin="round"><path d="M1275.4 125 C1273 132 1271.8 145 1271.8 156 C1272 180 1273.5 215 1274.6 245 C1275.5 270 1279 300 1282 330 C1283.5 350 1284 380 1284 417 C1284 440 1284 460 1284.5 475 C1285.5 500 1287 530 1287 580"/><path d="M1298.7 548.5 L1288 578"/><path d="M1244.7 553 L1279.4 579.4"/></g></svg>
<div class="a" style="left:1640px;top:42px;width:8px;height:631px;background:linear-gradient(90deg,rgba(0,0,0,0),rgba(0,0,0,0.10))"></div>
<div class="a" style="left:1648px;top:36px;width:224px;height:637px;background:#161616"></div>
<svg class="a" style="left:1648px;top:36px" width="224" height="132" viewBox="0 0 224 132"><defs><linearGradient id="p1bg" x1="0" y1="0" x2="1" y2="1"><stop offset="0" stop-color="#6a4e40"/><stop offset="0.45" stop-color="#8a6a56"/><stop offset="1" stop-color="#c99470"/></linearGradient><radialGradient id="p1face" cx="0.5" cy="0.45" r="0.6"><stop offset="0" stop-color="#f6dcc8"/><stop offset="0.7" stop-color="#ecc6aa"/><stop offset="1" stop-color="#c89a7c"/></radialGradient><filter id="bl1" x="-10%" y="-10%" width="120%" height="120%"><feGaussianBlur stdDeviation="1"/></filter></defs><rect x="0" y="0" width="224" height="132" fill="#101214"/><rect x="3" y="3" width="221" height="127" fill="url(#p1bg)"/><g filter="url(#bl1)"><rect x="3" y="3" width="36" height="127" fill="#6a4a3c" opacity="0.55"/><rect x="37.5" y="3" width="3" height="127" fill="#3e2c24"/><rect x="148" y="3" width="2.5" height="90" fill="#7a5a46" opacity="0.7"/><path d="M53 130 L53 92 C53 76 58 60 68 53 C74 50 80 52 84 58 L86 96 L80 130 Z" fill="#1a1716"/><path d="M60 96 C60 80 64 66 72 60 L80 62 L82 100 L72 130 L60 130 Z" fill="#5a4036" opacity="0.55"/><path d="M150 84 C160 84 170 92 173 104 L173 112 L156 112 Z" fill="#1a1716"/><path d="M72 130 C74 116 82 106 94 100 L116 104 C126 118 144 118 153 100 C166 104 176 110 180 130 Z" fill="#e6e4e0"/><path d="M86 66 C84 52 88 40 98 33 C110 27 130 25 146 34 C154 40 158 50 157 60 L118 64 L106 84 L90 86 Z" fill="#1c1918"/><path d="M82 62 C84 56 92 56 100 58 C108 62 111 72 110 84 C109 96 103 101 95 101 C87 101 82 94 82 82 Z" fill="#252927"/><path d="M98 66 L96 92" stroke="#5f635f" stroke-width="1.2"/><path d="M92 48 C100 38 116 32 130 32" stroke="#2c2c2c" stroke-width="3" fill="none"/><path d="M112 62 C124 56 146 54 157 59 C160 70 160 82 158 90 C155 104 150 114 143 120 C138 124 130 124 124 118 C116 112 109 102 107 92 C106 82 107 70 112 62 Z" fill="url(#p1face)"/><path d="M108 66 C118 56 140 52 157 58 L157 52 C148 44 124 42 110 52 Z" fill="#1c1918"/><path d="M124 84 h8 M142 83 h7" stroke="#6a4a40" stroke-width="1.3"/><path d="M133 107 h9" stroke="#b86e64" stroke-width="2.4"/><path d="M147 104 L154 122 L160 128" stroke="#1a1a1a" stroke-width="1.5" fill="none"/></g><rect x="0" y="0" width="224" height="132" fill="none" stroke="#101214" stroke-width="2"/><rect x="2.6" y="2.6" width="222" height="127" fill="none" stroke="#82c625" stroke-width="1.3"/><rect x="3.5" y="110" width="104" height="18.5" fill="rgba(40,40,40,0.62)"/><path d="M11 113.5 h6.5 l-1 1.8 v4.2 l2.2 2.2 h-8.9 l2.2 -2.2 v-4.2 z M14.3 121.7 v5" fill="#fff" stroke="#fff" stroke-width="1.2"/><text x="25.3" y="123.6" font-family="Liberation Sans" font-size="12.8" fill="#fff">Jia Tian Rong</text></svg>
<svg class="a" style="left:1648px;top:166px" width="224" height="129" viewBox="0 0 224 129"><defs><filter id="bl2" x="-10%" y="-10%" width="120%" height="120%"><feGaussianBlur stdDeviation="0.8"/></filter><filter id="bl3" x="-20%" y="-50%" width="140%" height="200%"><feGaussianBlur stdDeviation="3"/></filter><linearGradient id="p2bg" x1="0" y1="0" x2="1" y2="0"><stop offset="0" stop-color="#08090b"/><stop offset="0.45" stop-color="#14171a"/><stop offset="1" stop-color="#1c1f24"/></linearGradient><radialGradient id="p2face" cx="0.5" cy="0.45" r="0.6"><stop offset="0" stop-color="#f2e6e2"/><stop offset="1" stop-color="#d8c0b4"/></radialGradient></defs><rect x="0" y="0" width="224" height="129" fill="#111315"/><rect x="3" y="1" width="221" height="127" fill="url(#p2bg)"/><g filter="url(#bl3)"><path d="M12 -8 H230 V10 C205 17 160 20 110 19 C60 18 35 14 12 9 Z" fill="#fcfcfc"/><ellipse cx="108" cy="60" rx="11" ry="8" fill="#6a6e74"/><ellipse cx="156" cy="60" rx="10" ry="8" fill="#5a5e64"/></g><rect x="0" y="0" width="224" height="1" fill="#111315"/><g filter="url(#bl2)"><path d="M84 129 C84 110 86 90 96 84 C106 80 116 80 124 78 L144 78 C152 80 164 82 176 88 C184 96 188 112 190 129 Z" fill="#3a4768"/><path d="M124 76 L132 100 L142 76 Z" fill="#ece2dc"/><path d="M119 44 C118 34 126 30 134 30 C144 30 150 36 149 46 C150 60 148 74 140 82 C134 86 126 84 122 78 C118 70 117 56 119 44 Z" fill="url(#p2face)"/><path d="M117 48 C116 36 122 30 134 29 C146 29 151 36 150 48 C146 40 140 38 132 38 C124 38 120 42 117 48 Z" fill="#6c5444"/><path d="M132 100 L134 129" stroke="#e8e8e8" stroke-width="1.4"/><path d="M84 124 L100 124 L100 129 L84 129 Z M176 124 L190 124 L190 129 L176 129 Z" fill="#e6e6e6"/></g><rect x="3.5" y="108" width="80" height="19.5" fill="rgba(36,36,36,0.92)"/><text x="7" y="122.3" font-family="Liberation Sans" font-size="13" fill="#fff">Andre Witzel</text></svg>
<svg class="a" style="left:1648px;top:294px" width="224" height="128" viewBox="0 0 224 128"><defs><linearGradient id="p3wall" x1="0" y1="0" x2="1" y2="0"><stop offset="0" stop-color="#d6d4d0"/><stop offset="0.3" stop-color="#e2ded8"/><stop offset="0.7" stop-color="#d8cfc2"/><stop offset="1" stop-color="#c8bba8"/></linearGradient><filter id="bl4"><feGaussianBlur stdDeviation="0.8"/></filter></defs><rect x="0" y="0" width="224" height="128" fill="#111315"/><g filter="url(#bl4)"><rect x="3" y="1" width="221" height="126" fill="url(#p3wall)"/><path d="M3 1 H55 L3 28 Z" fill="#f2f0ee"/><path d="M3 28 L55 1 L70 1 L20 40 L3 60 Z" fill="#c9c2b8" opacity="0.8"/><rect x="3" y="28" width="14" height="60" fill="#a89c8c" opacity="0.6"/><rect x="22" y="78" width="44" height="30" fill="#e6e6e6"/><rect x="62" y="63" width="42" height="25" fill="#d8d8d8"/><rect x="61" y="9" width="26" height="18" fill="#8a9080" stroke="#e8e8e8" stroke-width="1.5"/><rect x="94" y="1" width="35" height="25" fill="#eeeeea" stroke="#2a2424" stroke-width="1.3"/><rect x="98" y="4" width="27" height="18" fill="#98aaa4"/><rect x="134" y="10" width="27" height="36" fill="#eae6e0" stroke="#4a3a30" stroke-width="1.3"/><rect x="137" y="14" width="21" height="28" fill="#8aa0b0"/><rect x="137" y="30" width="21" height="8" fill="#b89070" opacity="0.7"/><rect x="48" y="32" width="50" height="13" fill="#c8d4dc" opacity="0.8"/><rect x="180" y="1" width="15" height="126" fill="#eeebe6"/><path d="M194 1 H224 V70 L194 62 Z" fill="#b2d8e0"/><rect x="188" y="64" width="36" height="63" fill="#c08040"/><rect x="196" y="115" width="28" height="12" fill="#e8e8e8"/><path d="M55 127 C58 98 72 74 100 65 L112 63 C130 62 150 66 162 76 C168 95 170 115 170 127 Z" fill="#eadfc8"/><ellipse cx="121" cy="49" rx="18" ry="21" fill="#e8c8b2"/><path d="M101 44 C97 22 110 8 124 8 C138 8 146 18 142 34 C140 28 132 22 120 24 C110 26 104 34 101 44 Z" fill="#6e5036"/><path d="M106 45 h12 M124 45 h12" stroke="#d8d0c8" stroke-width="2.5"/><path d="M126 66 C134 60 142 64 144 74 L146 90 L132 92 Z" fill="#e8cab4"/></g><rect x="3.5" y="108" width="91" height="19" fill="rgba(40,40,40,0.72)"/><text x="7" y="122" font-family="Liberation Sans" font-size="12.6" fill="#fff">Diana Celewitz</text></svg>
<svg class="a" style="left:1648px;top:422px" width="224" height="128" viewBox="0 0 224 128"><rect x="0" y="0" width="224" height="128" fill="#232323"/><rect x="0" y="127" width="224" height="1" fill="#1a1a1a"/><rect x="75" y="24" width="80" height="80" fill="#ed6c00"/><text x="115" y="80" text-anchor="middle" font-family="Liberation Sans" font-size="42.5" fill="#fff">T</text><rect x="3.5" y="108" width="108.5" height="18.5" fill="#2c2c2c"/><g fill="#f25c5c"><path d="M10 113.6 a2.85 3 0 0 1 5.7 0 v3 a2.85 3 0 0 1 -5.7 0 z"/><path d="M11.4 117.5 h4.6 v2.2 a2.3 2.2 0 0 1 -4.6 0 z"/><rect x="10.4" y="121.8" width="5.6" height="1.3"/></g><path d="M6.6 123.6 L19.6 110.4" stroke="#2c2c2c" stroke-width="2.6"/><path d="M6.6 123.6 L19.6 110.4" stroke="#f25c5c" stroke-width="1.3"/><text x="25" y="121.4" font-family="Liberation Sans" font-size="12.8" fill="#fff">Thomas Busch</text></svg>
<svg class="a" style="left:1648px;top:550px" width="224" height="123" viewBox="0 0 224 123"><defs><linearGradient id="p5bg" x1="0" y1="0" x2="0" y2="1"><stop offset="0" stop-color="#06080c"/><stop offset="0.5" stop-color="#2e3448"/><stop offset="1" stop-color="#06080c"/></linearGradient></defs><rect x="0" y="0" width="224" height="123" fill="#232323"/><rect x="75" y="24" width="80" height="80" fill="url(#p5bg)"/><text x="116.5" y="92.5" text-anchor="middle" font-family="Liberation Serif" font-weight="bold" font-size="68" fill="#15181e" opacity="0.8">V</text><text x="115" y="91.2" text-anchor="middle" font-family="Liberation Serif" font-weight="bold" font-size="68" fill="#a9aeb9">V</text><rect x="124" y="75.5" width="31" height="6" fill="#6a6e78" opacity="0.45"/><rect x="125" y="76.5" width="8" height="1.3" fill="#d0d0d0" opacity="0.8"/><rect x="125" y="79" width="12" height="1" fill="#a0a0a0" opacity="0.7"/><rect x="3.5" y="107.5" width="68" height="16" fill="#2c2c2c"/><g fill="#f25c5c"><path d="M10 113.6 a2.85 3 0 0 1 5.7 0 v3 a2.85 3 0 0 1 -5.7 0 z"/><path d="M11.4 117.5 h4.6 v2.2 a2.3 2.2 0 0 1 -4.6 0 z"/><rect x="10.4" y="121.8" width="5.6" height="1.3"/></g><path d="M6.6 123.6 L19.6 110.4" stroke="#2c2c2c" stroke-width="2.6"/><path d="M6.6 123.6 L19.6 110.4" stroke="#f25c5c" stroke-width="1.3"/><text x="25" y="120.8" font-family="Liberation Sans" font-size="12.8" fill="#fff">Valmira</text></svg></body></html>
